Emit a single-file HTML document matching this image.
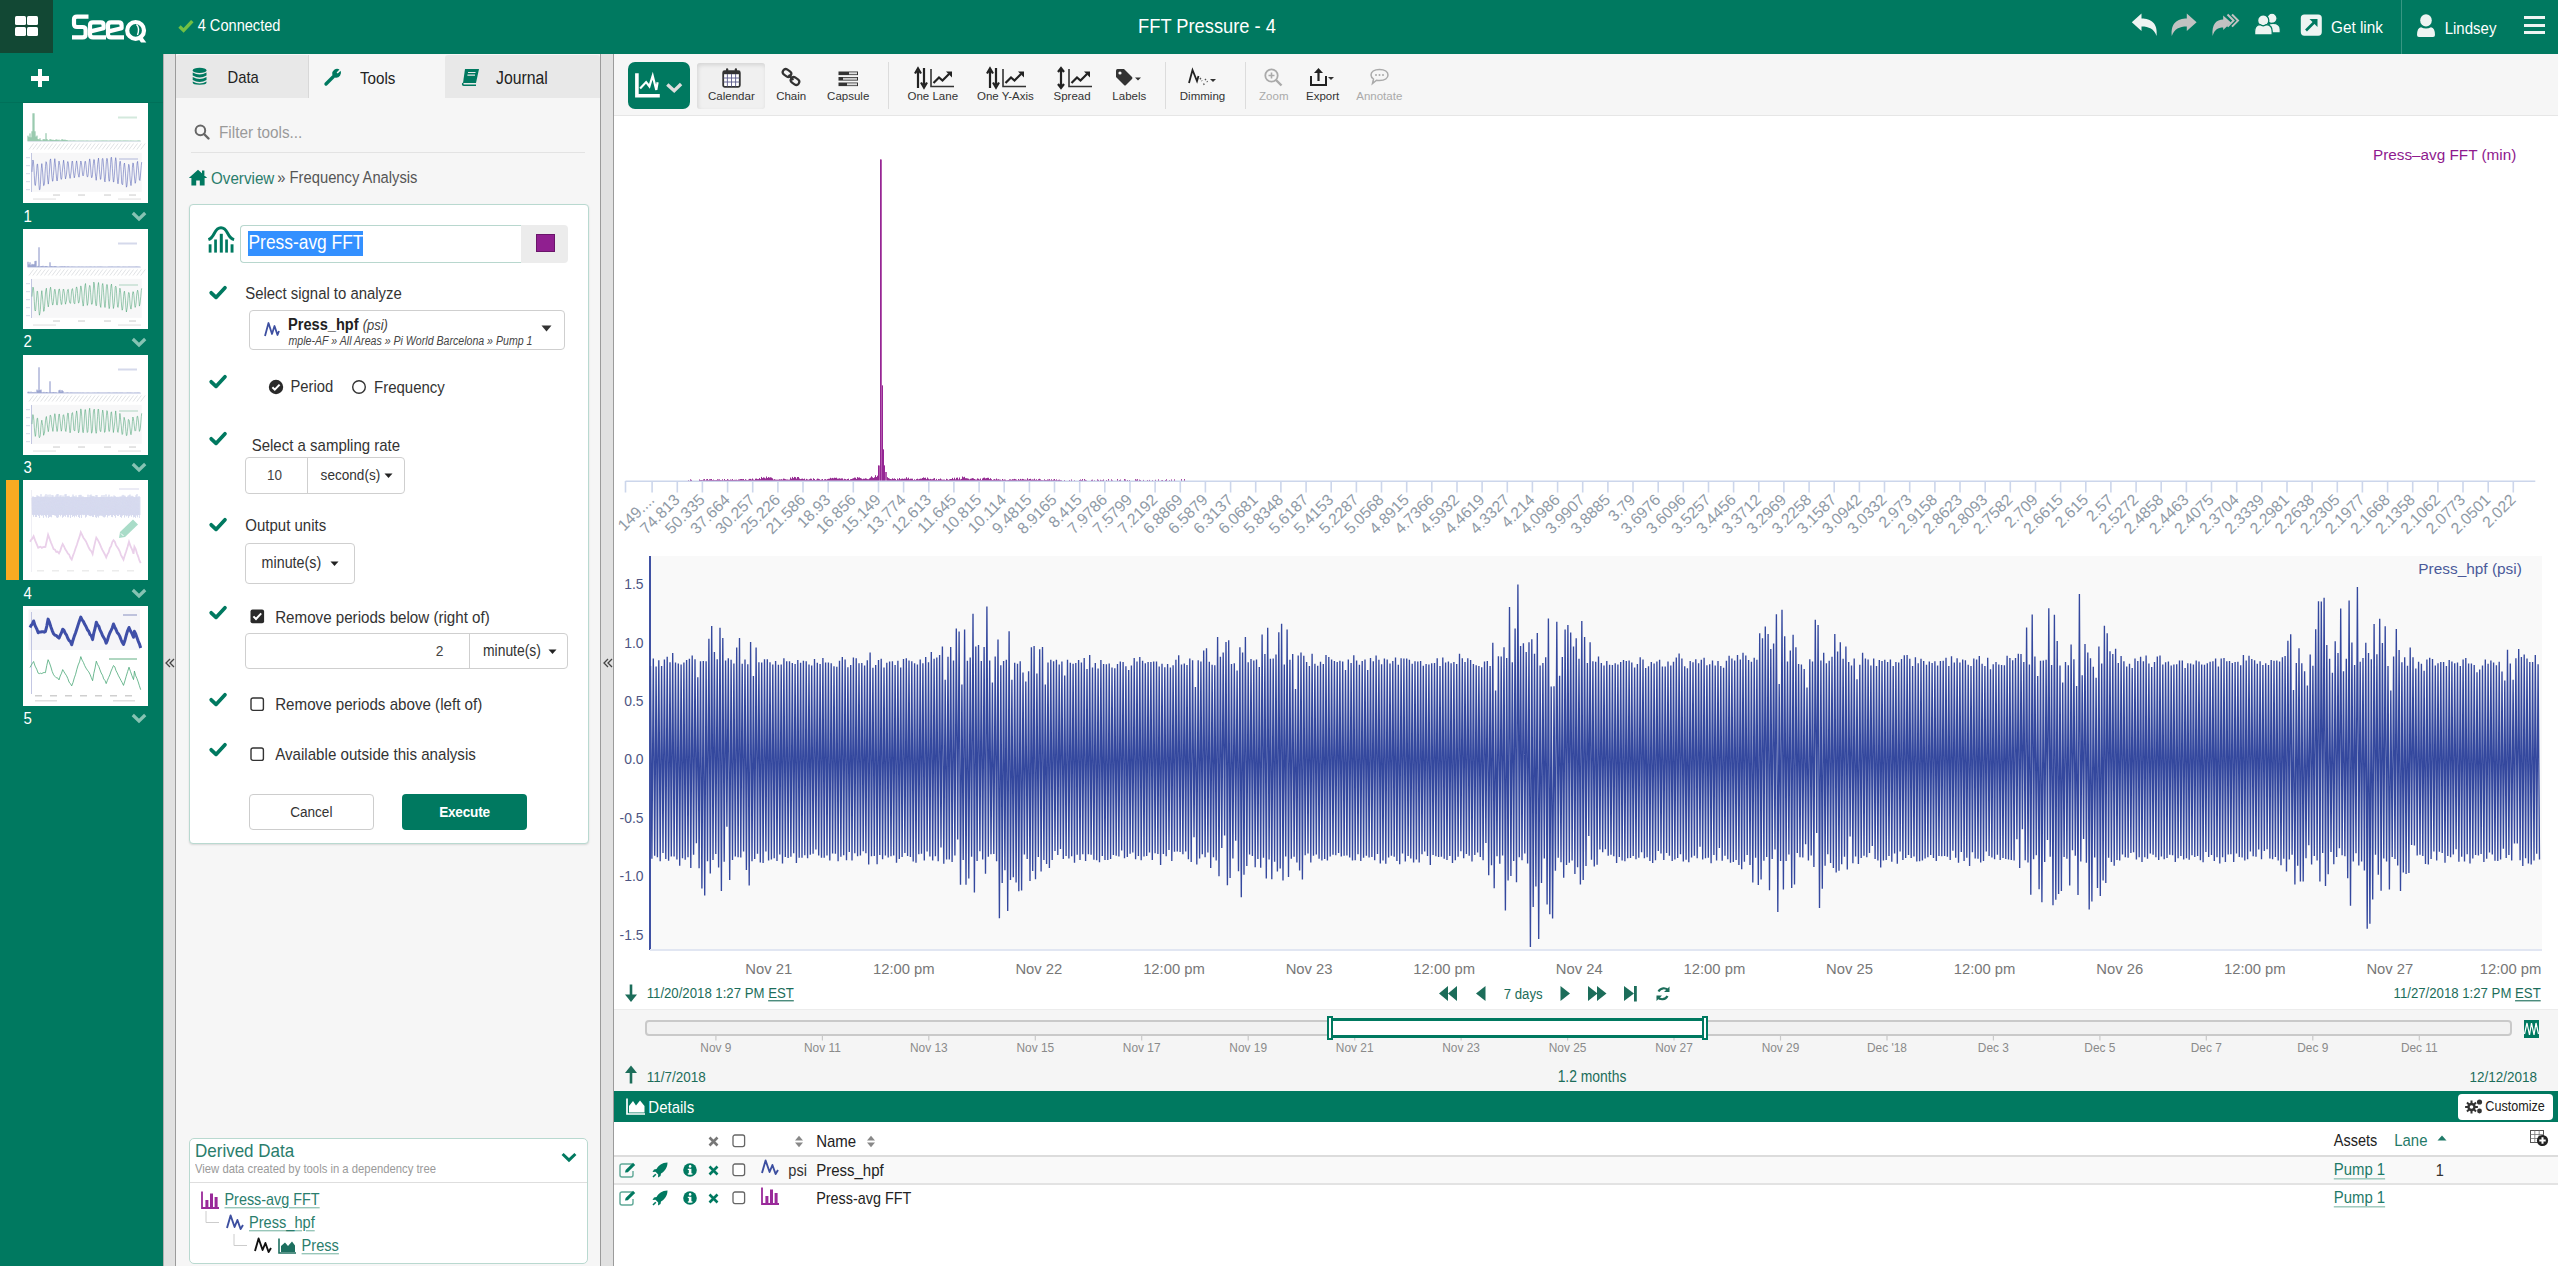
<!DOCTYPE html>
<html><head><meta charset="utf-8"><title>FFT Pressure - 4</title>
<style>
html,body{margin:0;padding:0;}
body{width:2558px;height:1266px;overflow:hidden;position:relative;background:#fff;font-family:"Liberation Sans", sans-serif;}
.t{position:absolute;white-space:nowrap;line-height:1;}
svg{position:absolute;overflow:visible;}
</style></head><body>
<div style="position:absolute;left:0px;top:0px;width:2558px;height:54px;background:#007960;"></div><div style="position:absolute;left:0px;top:0px;width:53px;height:53px;background:#124834;"></div><div style="position:absolute;left:14.5px;top:16px;width:11.2px;height:9.2px;background:#fff;border-radius:1.5px;"></div><div style="position:absolute;left:14.5px;top:26.8px;width:11.2px;height:9.2px;background:#fff;border-radius:1.5px;"></div><div style="position:absolute;left:26.5px;top:16px;width:11.2px;height:9.2px;background:#fff;border-radius:1.5px;"></div><div style="position:absolute;left:26.5px;top:26.8px;width:11.2px;height:9.2px;background:#fff;border-radius:1.5px;"></div><svg style="left:0;top:0" width="160" height="54" viewBox="0 0 160 54">
<g fill="none" stroke="#fff" stroke-width="4.2" stroke-linejoin="round">
<path d="M88.5,16.6 H77 Q74,16.6 74,19.6 V24 Q74,27 77,27 H82.5 Q85.6,27 85.6,30 V34.5 Q85.6,37.4 82.6,37.4 H72"/>
<path d="M89.5,31.6 L103.6,28.2 V25.2 Q103.6,22.3 100.8,22.3 H93 Q90,22.3 90,25.2 V34.5 Q90,37.4 93,37.4 H106"/>
<path d="M107.6,31.6 L121.6,28.2 V25.2 Q121.6,22.3 118.8,22.3 H111 Q108,22.3 108,25.2 V34.5 Q108,37.4 111,37.4 H124"/>
<circle cx="135.6" cy="30.4" r="8.4"/>
</g>
<path d="M137,37 L141.5,36 L146.3,42.6 L141,42.6 Z" fill="#fff"/>
<path d="M136.5,24.5 Q140,28 137.5,35" fill="none" stroke="#fff" stroke-width="1.4"/>
</svg><svg style="left:178px;top:19px" width="16" height="14" viewBox="0 0 16 14"><path d="M1.5,7.5 L5.6,11.4 L14.3,2.2" fill="none" stroke="#72c043" stroke-width="3.4"/></svg><div class="t " style="left:197.7px;top:18.8px;font-size:14.6px;color:#fff;transform:scaleY(1.12);transform-origin:0 84.65%;">4 Connected</div><div class="t " style="left:707.0px;width:1000px;text-align:center;top:17.8px;font-size:18.3px;color:#fff;transform:scaleY(1.12);transform-origin:0 84.65%;">FFT Pressure - 4</div><svg style="left:2131px;top:13px" width="28" height="24" viewBox="0 0 28 24"><path d="M0.8,9.2 L10.5,0.6 V5.4 C20,5.4 27,10 25.6,23 C23,16 18,13.6 10.5,13.6 V18 Z" fill="#eef4f2"/></svg><svg style="left:2171px;top:13px" width="28" height="24" viewBox="0 0 28 24"><path d="M25.6,9.2 L15.8,0.6 V5.4 C6.4,5.4 -0.6,10 0.8,23 C3.4,16 8.4,13.6 15.8,13.6 V18 Z" fill="#c2c2c2"/></svg><svg style="left:2212px;top:13px" width="28" height="24" viewBox="0 0 28 24"><path d="M19,9.6 L11.2,2.6 V6.6 C4.5,6.6 -0.5,11 0.6,23 C2.6,16.5 6,14.6 11.2,14.6 V17 Z" fill="#c2c2c2"/><path d="M15.5,1.5 L21.5,7.6 L15.5,13.6 M20,1.5 L26,7.6 L20,13.6" fill="none" stroke="#c2c2c2" stroke-width="2"/></svg><svg style="left:2250px;top:8px" width="34" height="32" viewBox="2250 8 34 32">
<g fill="#eef4f2" stroke="#007960" stroke-width="1.3">
<circle cx="2272" cy="18.3" r="5.1"/>
<path d="M2266.5,33 V29.5 Q2266.5,23.3 2273,23.3 Q2280.3,23.3 2280.3,29.5 V33 Z"/>
<circle cx="2263.2" cy="20.5" r="5.6"/>
<path d="M2254.6,35 V31.5 Q2254.6,25 2260,24.6 Q2263.2,27.2 2266.4,24.6 Q2272.2,25 2272.2,31.5 V35 Z"/>
</g></svg><svg style="left:2300px;top:14px" width="23" height="23" viewBox="0 0 23 23">
<rect x="0.8" y="0.5" width="21" height="21.2" rx="3.6" fill="#eef4f2"/>
<path d="M6,16.5 L15.5,7" stroke="#007960" stroke-width="2.6"/><path d="M9.5,5 H17.5 V13 Z" fill="#007960"/></svg><div class="t " style="left:2331.0px;top:20.3px;font-size:15.3px;color:#fff;transform:scaleY(1.12);transform-origin:0 84.65%;">Get link</div><div style="position:absolute;left:2401px;top:0px;width:1px;height:54px;background:rgba(255,255,255,0.22);"></div><svg style="left:2416px;top:13px" width="20" height="24" viewBox="0 0 20 24">
<g fill="#eef4f2"><ellipse cx="10" cy="7.4" rx="5.8" ry="6.2"/><path d="M1,22 Q1,15 5,14.2 Q10,17 15,14.2 Q19,15 19,22 Q19,24 17,24 H3 Q1,24 1,22 Z"/></g></svg><div class="t " style="left:2444.7px;top:20.5px;font-size:15.0px;color:#fff;transform:scaleY(1.12);transform-origin:0 84.65%;">Lindsey</div><div style="position:absolute;left:2523.5px;top:16.2px;width:21.5px;height:3.2px;background:#eef4f2;"></div><div style="position:absolute;left:2523.5px;top:23.5px;width:21.5px;height:3.2px;background:#eef4f2;"></div><div style="position:absolute;left:2523.5px;top:30.7px;width:21.5px;height:3.2px;background:#eef4f2;"></div><div style="position:absolute;left:0px;top:54px;width:163px;height:1212px;background:#007960;"></div><div style="position:absolute;left:30.8px;top:76px;width:18.5px;height:4.6px;background:#fff;"></div><div style="position:absolute;left:37.7px;top:69px;width:4.6px;height:18px;background:#fff;"></div><div style="position:absolute;left:0px;top:102px;width:163px;height:1px;background:rgba(0,0,0,0.07);"></div><div style="position:absolute;left:23px;top:103.3px;width:125px;height:100px;background:#fff;overflow:hidden;"><svg style="left:0;top:0" width="125" height="100" viewBox="0 0 125 100"><rect x="95" y="13.5" width="19" height="2" fill="#3a9a66" opacity="0.22"/><path d="M5.0,38.3 v-5.6 M6.0,38.3 v-4.2 M7.0,38.3 v-7.9 M8.0,38.3 v-4.0 M9.0,38.3 v-10.0 M10.0,38.3 v-28.0 M11.0,38.3 v-28.0 M12.0,38.3 v-10.0 M13.0,38.3 v-4.7 M14.0,38.3 v-5.7 M15.0,38.3 v-2.3 M16.0,38.3 v-1.9 M17.0,38.3 v-3.0 M18.0,38.3 v-1.2 M19.0,38.3 v-0.8 M20.0,38.3 v-1.9 M21.0,38.3 v-2.3 M22.0,38.3 v-1.7 M23.0,38.3 v-8.1 M24.0,38.3 v-2.3 M25.0,38.3 v-1.1 M26.0,38.3 v-1.0 M27.0,38.3 v-2.2 M28.0,38.3 v-1.9 M29.0,38.3 v-1.4 M30.0,38.3 v-1.6 M31.0,38.3 v-1.2 M32.0,38.3 v-1.3 M33.0,38.3 v-1.9 M34.0,38.3 v-1.8 M35.0,38.3 v-1.2 M36.0,38.3 v-1.7 M37.0,38.3 v-0.9 M38.0,38.3 v-1.1 M39.0,38.3 v-2.2 M40.0,38.3 v-1.7 M41.0,38.3 v-1.4 M42.0,38.3 v-1.7 M43.0,38.3 v-1.2 M44.0,38.3 v-1.3 M45.0,38.3 v-0.8 M46.0,38.3 v-0.7 M47.0,38.3 v-0.9 M48.0,38.3 v-0.8 M49.0,38.3 v-0.7 M50.0,38.3 v-0.8 M51.0,38.3 v-0.9 M52.0,38.3 v-0.7 M53.0,38.3 v-0.7 M54.0,38.3 v-0.6 M55.0,38.3 v-0.7 M56.0,38.3 v-0.7 M57.0,38.3 v-0.7 M58.0,38.3 v-0.7 M59.0,38.3 v-0.7 M60.0,38.3 v-0.7 M61.0,38.3 v-0.7 M62.0,38.3 v-0.6 M63.0,38.3 v-0.7 M64.0,38.3 v-0.8 M65.0,38.3 v-0.7 M66.0,38.3 v-0.6 M67.0,38.3 v-0.6 M68.0,38.3 v-0.7 M69.0,38.3 v-0.6 M70.0,38.3 v-0.6 M71.0,38.3 v-0.6 M72.0,38.3 v-0.7 M73.0,38.3 v-0.8 M74.0,38.3 v-0.7 M75.0,38.3 v-0.7 M76.0,38.3 v-0.7 M77.0,38.3 v-0.7 M78.0,38.3 v-0.7 M79.0,38.3 v-0.8 M80.0,38.3 v-0.8 M81.0,38.3 v-0.8 M82.0,38.3 v-0.7 M83.0,38.3 v-0.8 M84.0,38.3 v-0.8 M85.0,38.3 v-0.6 M86.0,38.3 v-0.7 M87.0,38.3 v-0.7 M88.0,38.3 v-0.8 M89.0,38.3 v-0.8 M90.0,38.3 v-0.7 M91.0,38.3 v-0.8 M92.0,38.3 v-0.7 M93.0,38.3 v-0.8 M94.0,38.3 v-0.8 M95.0,38.3 v-0.7 M96.0,38.3 v-0.8 M97.0,38.3 v-0.8 M98.0,38.3 v-0.8 M99.0,38.3 v-0.6 M100.0,38.3 v-0.8 M101.0,38.3 v-0.8 M102.0,38.3 v-0.8 M103.0,38.3 v-0.8 M104.0,38.3 v-0.7 M105.0,38.3 v-0.8 M106.0,38.3 v-0.6 M107.0,38.3 v-0.7 M108.0,38.3 v-0.8 M109.0,38.3 v-0.6 M110.0,38.3 v-0.7 M111.0,38.3 v-0.6 M112.0,38.3 v-0.6 M113.0,38.3 v-0.6 M114.0,38.3 v-0.6 M115.0,38.3 v-0.8 M116.0,38.3 v-0.8 M117.0,38.3 v-0.7" stroke="#3a9a66" stroke-width="0.8" opacity="0.8"/><line x1="5" y1="38.6" x2="118" y2="38.6" stroke="#d6dcec" stroke-width="0.6"/><line x1="6.0" y1="46.5" x2="10.5" y2="40.5" stroke="#b0b6bc" stroke-width="0.7" opacity="0.55"/><line x1="9.8" y1="46.5" x2="14.3" y2="40.5" stroke="#b0b6bc" stroke-width="0.7" opacity="0.55"/><line x1="13.7" y1="46.5" x2="18.2" y2="40.5" stroke="#b0b6bc" stroke-width="0.7" opacity="0.55"/><line x1="17.6" y1="46.5" x2="22.1" y2="40.5" stroke="#b0b6bc" stroke-width="0.7" opacity="0.55"/><line x1="21.4" y1="46.5" x2="25.9" y2="40.5" stroke="#b0b6bc" stroke-width="0.7" opacity="0.55"/><line x1="25.2" y1="46.5" x2="29.8" y2="40.5" stroke="#b0b6bc" stroke-width="0.7" opacity="0.55"/><line x1="29.1" y1="46.5" x2="33.6" y2="40.5" stroke="#b0b6bc" stroke-width="0.7" opacity="0.55"/><line x1="33.0" y1="46.5" x2="37.5" y2="40.5" stroke="#b0b6bc" stroke-width="0.7" opacity="0.55"/><line x1="36.8" y1="46.5" x2="41.3" y2="40.5" stroke="#b0b6bc" stroke-width="0.7" opacity="0.55"/><line x1="40.6" y1="46.5" x2="45.1" y2="40.5" stroke="#b0b6bc" stroke-width="0.7" opacity="0.55"/><line x1="44.5" y1="46.5" x2="49.0" y2="40.5" stroke="#b0b6bc" stroke-width="0.7" opacity="0.55"/><line x1="48.4" y1="46.5" x2="52.9" y2="40.5" stroke="#b0b6bc" stroke-width="0.7" opacity="0.55"/><line x1="52.2" y1="46.5" x2="56.7" y2="40.5" stroke="#b0b6bc" stroke-width="0.7" opacity="0.55"/><line x1="56.1" y1="46.5" x2="60.6" y2="40.5" stroke="#b0b6bc" stroke-width="0.7" opacity="0.55"/><line x1="59.9" y1="46.5" x2="64.4" y2="40.5" stroke="#b0b6bc" stroke-width="0.7" opacity="0.55"/><line x1="63.8" y1="46.5" x2="68.2" y2="40.5" stroke="#b0b6bc" stroke-width="0.7" opacity="0.55"/><line x1="67.6" y1="46.5" x2="72.1" y2="40.5" stroke="#b0b6bc" stroke-width="0.7" opacity="0.55"/><line x1="71.5" y1="46.5" x2="76.0" y2="40.5" stroke="#b0b6bc" stroke-width="0.7" opacity="0.55"/><line x1="75.3" y1="46.5" x2="79.8" y2="40.5" stroke="#b0b6bc" stroke-width="0.7" opacity="0.55"/><line x1="79.2" y1="46.5" x2="83.7" y2="40.5" stroke="#b0b6bc" stroke-width="0.7" opacity="0.55"/><line x1="83.0" y1="46.5" x2="87.5" y2="40.5" stroke="#b0b6bc" stroke-width="0.7" opacity="0.55"/><line x1="86.9" y1="46.5" x2="91.4" y2="40.5" stroke="#b0b6bc" stroke-width="0.7" opacity="0.55"/><line x1="90.7" y1="46.5" x2="95.2" y2="40.5" stroke="#b0b6bc" stroke-width="0.7" opacity="0.55"/><line x1="94.5" y1="46.5" x2="99.0" y2="40.5" stroke="#b0b6bc" stroke-width="0.7" opacity="0.55"/><line x1="98.4" y1="46.5" x2="102.9" y2="40.5" stroke="#b0b6bc" stroke-width="0.7" opacity="0.55"/><line x1="102.2" y1="46.5" x2="106.8" y2="40.5" stroke="#b0b6bc" stroke-width="0.7" opacity="0.55"/><line x1="106.1" y1="46.5" x2="110.6" y2="40.5" stroke="#b0b6bc" stroke-width="0.7" opacity="0.55"/><line x1="110.0" y1="46.5" x2="114.5" y2="40.5" stroke="#b0b6bc" stroke-width="0.7" opacity="0.55"/><line x1="113.8" y1="46.5" x2="118.3" y2="40.5" stroke="#b0b6bc" stroke-width="0.7" opacity="0.55"/><line x1="117.7" y1="46.5" x2="122.2" y2="40.5" stroke="#b0b6bc" stroke-width="0.7" opacity="0.55"/><rect x="8.3" y="49.8" width="110.4" height="39" fill="#f7f7f8"/><rect x="96" y="55" width="19" height="2" fill="#4a58b0" opacity="0.2"/><line x1="8.5" y1="50" x2="8.5" y2="89" stroke="#aab0d6" stroke-width="0.7"/><rect x="3" y="54" width="4" height="1.2" fill="#dde0ec"/><rect x="3" y="62" width="4" height="1.2" fill="#dde0ec"/><rect x="3" y="70" width="4" height="1.2" fill="#dde0ec"/><rect x="3" y="78" width="4" height="1.2" fill="#dde0ec"/><rect x="3" y="86" width="4" height="1.2" fill="#dde0ec"/><path d="M9.0,68.9 L9.5,61.0 L9.9,57.0 L10.4,58.4 L10.9,64.4 L11.3,72.7 L11.8,81.1 L12.3,82.5 L12.7,80.1 L13.2,74.1 L13.7,67.8 L14.1,61.3 L14.6,61.1 L15.0,65.6 L15.5,73.8 L16.0,82.4 L16.4,86.7 L16.9,86.6 L17.4,81.4 L17.8,73.0 L18.3,65.5 L18.8,60.6 L19.2,64.0 L19.7,69.9 L20.2,77.9 L20.6,82.6 L21.1,82.3 L21.6,79.1 L22.0,70.5 L22.5,63.6 L23.0,58.7 L23.4,59.3 L23.9,62.0 L24.3,71.4 L24.8,77.5 L25.3,81.1 L25.7,78.0 L26.2,71.5 L26.7,64.1 L27.1,57.3 L27.6,55.9 L28.1,60.9 L28.5,68.1 L29.0,74.6 L29.5,78.2 L29.9,78.1 L30.4,72.4 L30.9,66.5 L31.3,60.2 L31.8,55.7 L32.2,59.2 L32.7,64.8 L33.2,70.9 L33.6,75.9 L34.1,78.0 L34.6,75.0 L35.0,69.2 L35.5,62.1 L36.0,58.1 L36.4,59.7 L36.9,62.4 L37.4,68.6 L37.8,75.0 L38.3,76.4 L38.8,75.0 L39.2,69.7 L39.7,65.0 L40.2,60.3 L40.6,57.2 L41.1,60.9 L41.6,66.5 L42.0,72.3 L42.5,75.9 L42.9,74.2 L43.4,71.8 L43.9,66.7 L44.3,60.6 L44.8,58.5 L45.3,60.0 L45.7,64.0 L46.2,70.3 L46.7,73.7 L47.1,75.4 L47.6,72.2 L48.1,69.0 L48.5,63.9 L49.0,58.6 L49.5,58.0 L49.9,61.9 L50.4,68.1 L50.9,72.4 L51.3,74.8 L51.8,72.7 L52.2,69.3 L52.7,64.8 L53.2,60.0 L53.6,57.9 L54.1,60.7 L54.6,66.1 L55.0,70.1 L55.5,72.6 L56.0,74.2 L56.4,71.9 L56.9,65.1 L57.4,61.2 L57.8,58.0 L58.3,59.3 L58.8,62.9 L59.2,67.9 L59.7,72.3 L60.2,72.9 L60.6,71.6 L61.1,66.8 L61.5,62.8 L62.0,58.3 L62.5,58.5 L62.9,61.4 L63.4,66.8 L63.9,72.1 L64.3,73.9 L64.8,73.7 L65.3,70.2 L65.7,64.2 L66.2,59.1 L66.7,55.9 L67.1,58.1 L67.6,64.1 L68.1,71.1 L68.5,74.5 L69.0,74.6 L69.5,71.4 L69.9,65.3 L70.4,60.3 L70.8,56.5 L71.3,56.8 L71.8,62.5 L72.2,69.1 L72.7,73.3 L73.2,77.3 L73.6,73.7 L74.1,68.9 L74.6,61.7 L75.0,58.3 L75.5,55.1 L76.0,60.1 L76.4,66.6 L76.9,71.5 L77.4,76.4 L77.8,76.2 L78.3,71.0 L78.8,63.2 L79.2,56.5 L79.7,55.4 L80.1,57.1 L80.6,64.2 L81.1,72.0 L81.5,77.5 L82.0,78.9 L82.5,73.2 L82.9,66.6 L83.4,58.4 L83.9,55.3 L84.3,56.0 L84.8,61.0 L85.3,68.3 L85.7,75.5 L86.2,78.3 L86.7,77.0 L87.1,69.2 L87.6,61.8 L88.0,54.8 L88.5,54.2 L89.0,59.4 L89.4,65.7 L89.9,73.4 L90.4,79.0 L90.8,78.9 L91.3,72.8 L91.8,65.8 L92.2,58.6 L92.7,54.7 L93.2,57.4 L93.6,65.0 L94.1,73.2 L94.6,78.6 L95.0,80.8 L95.5,77.4 L96.0,70.2 L96.4,63.0 L96.9,58.4 L97.4,58.4 L97.8,63.6 L98.3,71.4 L98.7,80.3 L99.2,81.5 L99.7,81.5 L100.1,74.3 L100.6,66.6 L101.1,61.2 L101.5,60.1 L102.0,64.3 L102.5,70.9 L102.9,77.7 L103.4,84.2 L103.9,83.0 L104.3,78.9 L104.8,70.8 L105.3,65.0 L105.7,61.3 L106.2,62.5 L106.7,69.2 L107.1,76.2 L107.6,80.2 L108.0,82.6 L108.5,78.1 L109.0,72.6 L109.4,64.3 L109.9,59.9 L110.4,60.6 L110.8,65.5 L111.3,72.0 L111.8,77.3 L112.2,80.3 L112.7,78.4 L113.2,73.3 L113.6,66.9 L114.1,60.1 L114.6,58.4 L115.0,62.4 L115.5,67.3 L116.0,72.8 L116.4,77.0 L116.9,77.5 L117.3,74.0 L117.8,68.0 L118.3,62.3 L118.7,59.1" fill="none" stroke="#4a58b0" stroke-width="0.7" opacity="0.75"/><rect x="30" y="91.3" width="7" height="1.5" fill="#dcdcdc"/><rect x="55" y="91.3" width="7" height="1.5" fill="#dcdcdc"/><rect x="81" y="91.3" width="7" height="1.5" fill="#dcdcdc"/><rect x="106" y="91.3" width="7" height="1.5" fill="#dcdcdc"/><rect x="10" y="95.4" width="23" height="1.3" fill="#e6e6e6"/><rect x="95" y="95.4" width="23" height="1.3" fill="#e6e6e6"/></svg></div><div class="t " style="left:23.5px;top:208.7px;font-size:15px;color:#fff;transform:scaleY(1.12);transform-origin:0 84.65%;">1</div><svg style="left:131px;top:210.9px" width="16" height="11" viewBox="0 0 16 11"><path d="M1.8,2 L8,8 L14.2,2" fill="none" stroke="#86c3b3" stroke-width="3.2"/></svg><div style="position:absolute;left:23px;top:228.9px;width:125px;height:100px;background:#fff;overflow:hidden;"><svg style="left:0;top:0" width="125" height="100" viewBox="0 0 125 100"><rect x="95" y="13.5" width="19" height="2" fill="#4050a4" opacity="0.22"/><path d="M5.0,38.3 v-5.5 M6.0,38.3 v-2.9 M7.0,38.3 v-5.0 M8.0,38.3 v-2.1 M9.0,38.3 v-3.4 M10.0,38.3 v-2.8 M11.0,38.3 v-3.1 M12.0,38.3 v-6.2 M13.0,38.3 v-6.5 M14.0,38.3 v-0.7 M15.0,38.3 v-1.4 M16.0,38.3 v-20.0 M17.0,38.3 v-0.7 M18.0,38.3 v-1.3 M19.0,38.3 v-1.1 M20.0,38.3 v-1.5 M21.0,38.3 v-0.8 M22.0,38.3 v-1.1 M23.0,38.3 v-1.3 M24.0,38.3 v-1.1 M25.0,38.3 v-0.8 M26.0,38.3 v-0.7 M27.0,38.3 v-5.0 M28.0,38.3 v-1.0 M29.0,38.3 v-1.3 M30.0,38.3 v-0.7 M31.0,38.3 v-1.2 M32.0,38.3 v-1.1 M33.0,38.3 v-1.2 M34.0,38.3 v-0.6 M35.0,38.3 v-0.8 M36.0,38.3 v-0.6 M37.0,38.3 v-1.0 M38.0,38.3 v-0.8 M39.0,38.3 v-1.1 M40.0,38.3 v-0.8 M41.0,38.3 v-1.0 M42.0,38.3 v-1.0 M43.0,38.3 v-0.7 M44.0,38.3 v-0.8 M45.0,38.3 v-1.0 M46.0,38.3 v-0.8 M47.0,38.3 v-0.7 M48.0,38.3 v-0.7 M49.0,38.3 v-0.9 M50.0,38.3 v-0.7 M51.0,38.3 v-0.8 M52.0,38.3 v-0.7 M53.0,38.3 v-0.7 M54.0,38.3 v-0.6 M55.0,38.3 v-0.8 M56.0,38.3 v-0.8 M57.0,38.3 v-0.7 M58.0,38.3 v-0.7 M59.0,38.3 v-0.8 M60.0,38.3 v-0.7 M61.0,38.3 v-0.7 M62.0,38.3 v-0.6 M63.0,38.3 v-0.8 M64.0,38.3 v-0.7 M65.0,38.3 v-0.7 M66.0,38.3 v-0.7 M67.0,38.3 v-0.8 M68.0,38.3 v-0.8 M69.0,38.3 v-0.7 M70.0,38.3 v-0.6 M71.0,38.3 v-0.8 M72.0,38.3 v-0.8 M73.0,38.3 v-0.6 M74.0,38.3 v-0.7 M75.0,38.3 v-0.8 M76.0,38.3 v-0.7 M77.0,38.3 v-0.8 M78.0,38.3 v-0.8 M79.0,38.3 v-0.7 M80.0,38.3 v-0.7 M81.0,38.3 v-0.6 M82.0,38.3 v-0.7 M83.0,38.3 v-0.6 M84.0,38.3 v-0.6 M85.0,38.3 v-0.7 M86.0,38.3 v-0.8 M87.0,38.3 v-0.7 M88.0,38.3 v-0.8 M89.0,38.3 v-0.8 M90.0,38.3 v-0.8 M91.0,38.3 v-0.6 M92.0,38.3 v-0.8 M93.0,38.3 v-0.6 M94.0,38.3 v-0.8 M95.0,38.3 v-0.8 M96.0,38.3 v-0.8 M97.0,38.3 v-0.7 M98.0,38.3 v-0.6 M99.0,38.3 v-0.6 M100.0,38.3 v-0.8 M101.0,38.3 v-0.7 M102.0,38.3 v-0.7 M103.0,38.3 v-0.7 M104.0,38.3 v-0.6 M105.0,38.3 v-0.7 M106.0,38.3 v-0.8 M107.0,38.3 v-0.7 M108.0,38.3 v-0.7 M109.0,38.3 v-0.7 M110.0,38.3 v-0.7 M111.0,38.3 v-0.7 M112.0,38.3 v-0.7 M113.0,38.3 v-0.8 M114.0,38.3 v-0.8 M115.0,38.3 v-0.7 M116.0,38.3 v-0.7 M117.0,38.3 v-0.6" stroke="#4050a4" stroke-width="0.8" opacity="0.8"/><line x1="5" y1="38.6" x2="118" y2="38.6" stroke="#d6dcec" stroke-width="0.6"/><line x1="6.0" y1="46.5" x2="10.5" y2="40.5" stroke="#b0b6bc" stroke-width="0.7" opacity="0.55"/><line x1="9.8" y1="46.5" x2="14.3" y2="40.5" stroke="#b0b6bc" stroke-width="0.7" opacity="0.55"/><line x1="13.7" y1="46.5" x2="18.2" y2="40.5" stroke="#b0b6bc" stroke-width="0.7" opacity="0.55"/><line x1="17.6" y1="46.5" x2="22.1" y2="40.5" stroke="#b0b6bc" stroke-width="0.7" opacity="0.55"/><line x1="21.4" y1="46.5" x2="25.9" y2="40.5" stroke="#b0b6bc" stroke-width="0.7" opacity="0.55"/><line x1="25.2" y1="46.5" x2="29.8" y2="40.5" stroke="#b0b6bc" stroke-width="0.7" opacity="0.55"/><line x1="29.1" y1="46.5" x2="33.6" y2="40.5" stroke="#b0b6bc" stroke-width="0.7" opacity="0.55"/><line x1="33.0" y1="46.5" x2="37.5" y2="40.5" stroke="#b0b6bc" stroke-width="0.7" opacity="0.55"/><line x1="36.8" y1="46.5" x2="41.3" y2="40.5" stroke="#b0b6bc" stroke-width="0.7" opacity="0.55"/><line x1="40.6" y1="46.5" x2="45.1" y2="40.5" stroke="#b0b6bc" stroke-width="0.7" opacity="0.55"/><line x1="44.5" y1="46.5" x2="49.0" y2="40.5" stroke="#b0b6bc" stroke-width="0.7" opacity="0.55"/><line x1="48.4" y1="46.5" x2="52.9" y2="40.5" stroke="#b0b6bc" stroke-width="0.7" opacity="0.55"/><line x1="52.2" y1="46.5" x2="56.7" y2="40.5" stroke="#b0b6bc" stroke-width="0.7" opacity="0.55"/><line x1="56.1" y1="46.5" x2="60.6" y2="40.5" stroke="#b0b6bc" stroke-width="0.7" opacity="0.55"/><line x1="59.9" y1="46.5" x2="64.4" y2="40.5" stroke="#b0b6bc" stroke-width="0.7" opacity="0.55"/><line x1="63.8" y1="46.5" x2="68.2" y2="40.5" stroke="#b0b6bc" stroke-width="0.7" opacity="0.55"/><line x1="67.6" y1="46.5" x2="72.1" y2="40.5" stroke="#b0b6bc" stroke-width="0.7" opacity="0.55"/><line x1="71.5" y1="46.5" x2="76.0" y2="40.5" stroke="#b0b6bc" stroke-width="0.7" opacity="0.55"/><line x1="75.3" y1="46.5" x2="79.8" y2="40.5" stroke="#b0b6bc" stroke-width="0.7" opacity="0.55"/><line x1="79.2" y1="46.5" x2="83.7" y2="40.5" stroke="#b0b6bc" stroke-width="0.7" opacity="0.55"/><line x1="83.0" y1="46.5" x2="87.5" y2="40.5" stroke="#b0b6bc" stroke-width="0.7" opacity="0.55"/><line x1="86.9" y1="46.5" x2="91.4" y2="40.5" stroke="#b0b6bc" stroke-width="0.7" opacity="0.55"/><line x1="90.7" y1="46.5" x2="95.2" y2="40.5" stroke="#b0b6bc" stroke-width="0.7" opacity="0.55"/><line x1="94.5" y1="46.5" x2="99.0" y2="40.5" stroke="#b0b6bc" stroke-width="0.7" opacity="0.55"/><line x1="98.4" y1="46.5" x2="102.9" y2="40.5" stroke="#b0b6bc" stroke-width="0.7" opacity="0.55"/><line x1="102.2" y1="46.5" x2="106.8" y2="40.5" stroke="#b0b6bc" stroke-width="0.7" opacity="0.55"/><line x1="106.1" y1="46.5" x2="110.6" y2="40.5" stroke="#b0b6bc" stroke-width="0.7" opacity="0.55"/><line x1="110.0" y1="46.5" x2="114.5" y2="40.5" stroke="#b0b6bc" stroke-width="0.7" opacity="0.55"/><line x1="113.8" y1="46.5" x2="118.3" y2="40.5" stroke="#b0b6bc" stroke-width="0.7" opacity="0.55"/><line x1="117.7" y1="46.5" x2="122.2" y2="40.5" stroke="#b0b6bc" stroke-width="0.7" opacity="0.55"/><rect x="8.3" y="49.8" width="110.4" height="39" fill="#f7f7f8"/><rect x="96" y="55" width="19" height="2" fill="#3f9e6c" opacity="0.2"/><line x1="8.5" y1="50" x2="8.5" y2="89" stroke="#aab0d6" stroke-width="0.7"/><rect x="3" y="54" width="4" height="1.2" fill="#dde0ec"/><rect x="3" y="62" width="4" height="1.2" fill="#dde0ec"/><rect x="3" y="70" width="4" height="1.2" fill="#dde0ec"/><rect x="3" y="78" width="4" height="1.2" fill="#dde0ec"/><rect x="3" y="86" width="4" height="1.2" fill="#dde0ec"/><path d="M9.0,67.6 L9.5,61.1 L9.9,58.1 L10.4,58.8 L10.9,64.1 L11.3,72.3 L11.8,80.8 L12.3,82.0 L12.7,80.8 L13.2,74.1 L13.7,67.9 L14.1,62.1 L14.6,62.4 L15.0,66.6 L15.5,73.7 L16.0,82.7 L16.4,86.2 L16.9,84.2 L17.4,80.4 L17.8,72.8 L18.3,65.9 L18.8,61.7 L19.2,65.2 L19.7,70.7 L20.2,76.5 L20.6,82.3 L21.1,82.1 L21.6,77.4 L22.0,71.0 L22.5,64.0 L23.0,60.5 L23.4,59.2 L23.9,65.2 L24.3,70.9 L24.8,75.3 L25.3,77.9 L25.7,75.4 L26.2,70.3 L26.7,64.1 L27.1,60.0 L27.6,58.2 L28.1,61.9 L28.5,68.3 L29.0,72.6 L29.5,75.9 L29.9,75.9 L30.4,72.7 L30.9,66.7 L31.3,62.0 L31.8,60.2 L32.2,61.2 L32.7,65.6 L33.2,71.0 L33.6,75.2 L34.1,76.1 L34.6,74.3 L35.0,67.9 L35.5,62.9 L36.0,60.1 L36.4,60.0 L36.9,63.0 L37.4,69.5 L37.8,72.4 L38.3,75.5 L38.8,75.3 L39.2,70.7 L39.7,64.7 L40.2,60.6 L40.6,60.0 L41.1,62.4 L41.6,66.0 L42.0,72.0 L42.5,75.2 L42.9,73.5 L43.4,72.2 L43.9,66.2 L44.3,62.5 L44.8,60.6 L45.3,60.4 L45.7,64.3 L46.2,70.8 L46.7,73.6 L47.1,74.3 L47.6,74.2 L48.1,68.3 L48.5,62.9 L49.0,60.3 L49.5,59.6 L49.9,62.3 L50.4,66.9 L50.9,73.6 L51.3,74.5 L51.8,74.8 L52.2,69.5 L52.7,64.8 L53.2,59.0 L53.6,57.9 L54.1,59.6 L54.6,64.5 L55.0,70.6 L55.5,74.0 L56.0,73.7 L56.4,70.9 L56.9,66.1 L57.4,60.1 L57.8,56.9 L58.3,58.5 L58.8,63.1 L59.2,69.9 L59.7,74.1 L60.2,77.1 L60.6,74.8 L61.1,67.6 L61.5,61.1 L62.0,56.4 L62.5,54.5 L62.9,59.0 L63.4,65.9 L63.9,73.1 L64.3,76.4 L64.8,74.6 L65.3,69.9 L65.7,64.0 L66.2,58.6 L66.7,56.4 L67.1,57.3 L67.6,63.5 L68.1,70.9 L68.5,75.1 L69.0,75.4 L69.5,73.7 L69.9,65.4 L70.4,59.1 L70.8,53.1 L71.3,54.9 L71.8,61.2 L72.2,69.2 L72.7,74.9 L73.2,76.8 L73.6,75.8 L74.1,68.1 L74.6,60.7 L75.0,56.4 L75.5,53.5 L76.0,58.3 L76.4,65.7 L76.9,73.5 L77.4,77.2 L77.8,78.4 L78.3,72.2 L78.8,64.2 L79.2,56.3 L79.7,54.5 L80.1,56.8 L80.6,63.5 L81.1,70.6 L81.5,75.8 L82.0,78.5 L82.5,74.5 L82.9,66.8 L83.4,57.6 L83.9,55.4 L84.3,55.9 L84.8,61.1 L85.3,69.5 L85.7,76.4 L86.2,79.6 L86.7,77.4 L87.1,68.8 L87.6,62.3 L88.0,56.9 L88.5,55.1 L89.0,59.7 L89.4,66.1 L89.9,74.2 L90.4,79.5 L90.8,77.7 L91.3,73.7 L91.8,66.1 L92.2,58.4 L92.7,57.2 L93.2,58.6 L93.6,64.4 L94.1,72.5 L94.6,77.9 L95.0,78.4 L95.5,75.6 L96.0,69.0 L96.4,63.5 L96.9,59.2 L97.4,61.4 L97.8,65.2 L98.3,72.7 L98.7,78.1 L99.2,81.2 L99.7,79.4 L100.1,75.2 L100.6,67.6 L101.1,62.9 L101.5,62.2 L102.0,66.9 L102.5,71.3 L102.9,78.8 L103.4,83.0 L103.9,80.5 L104.3,78.0 L104.8,71.7 L105.3,65.3 L105.7,63.4 L106.2,64.0 L106.7,69.7 L107.1,75.7 L107.6,78.9 L108.0,80.1 L108.5,77.3 L109.0,71.8 L109.4,66.3 L109.9,62.7 L110.4,62.9 L110.8,65.4 L111.3,70.7 L111.8,76.9 L112.2,78.4 L112.7,76.7 L113.2,72.9 L113.6,66.8 L114.1,63.1 L114.6,61.2 L115.0,62.7 L115.5,67.3 L116.0,72.3 L116.4,77.1 L116.9,75.2 L117.3,71.9 L117.8,67.3 L118.3,61.6 L118.7,59.3" fill="none" stroke="#3f9e6c" stroke-width="0.7" opacity="0.75"/><rect x="30" y="91.3" width="7" height="1.5" fill="#dcdcdc"/><rect x="55" y="91.3" width="7" height="1.5" fill="#dcdcdc"/><rect x="81" y="91.3" width="7" height="1.5" fill="#dcdcdc"/><rect x="106" y="91.3" width="7" height="1.5" fill="#dcdcdc"/><rect x="10" y="95.4" width="23" height="1.3" fill="#e6e6e6"/><rect x="95" y="95.4" width="23" height="1.3" fill="#e6e6e6"/></svg></div><div class="t " style="left:23.5px;top:334.3px;font-size:15px;color:#fff;transform:scaleY(1.12);transform-origin:0 84.65%;">2</div><svg style="left:131px;top:336.5px" width="16" height="11" viewBox="0 0 16 11"><path d="M1.8,2 L8,8 L14.2,2" fill="none" stroke="#86c3b3" stroke-width="3.2"/></svg><div style="position:absolute;left:23px;top:354.5px;width:125px;height:100px;background:#fff;overflow:hidden;"><svg style="left:0;top:0" width="125" height="100" viewBox="0 0 125 100"><rect x="95" y="13.5" width="19" height="2" fill="#4050a4" opacity="0.22"/><path d="M5.0,38.3 v-1.5 M6.0,38.3 v-1.6 M7.0,38.3 v-0.8 M8.0,38.3 v-1.7 M9.0,38.3 v-0.8 M10.0,38.3 v-1.3 M11.0,38.3 v-0.7 M12.0,38.3 v-1.4 M13.0,38.3 v-0.8 M14.0,38.3 v-3.7 M15.0,38.3 v-2.8 M16.0,38.3 v-26.0 M17.0,38.3 v-3.1 M18.0,38.3 v-3.7 M19.0,38.3 v-1.0 M20.0,38.3 v-0.9 M21.0,38.3 v-1.4 M22.0,38.3 v-0.7 M23.0,38.3 v-1.2 M24.0,38.3 v-1.3 M25.0,38.3 v-0.7 M26.0,38.3 v-0.9 M27.0,38.3 v-12.0 M28.0,38.3 v-1.0 M29.0,38.3 v-0.9 M30.0,38.3 v-1.2 M31.0,38.3 v-1.2 M32.0,38.3 v-0.8 M33.0,38.3 v-1.2 M34.0,38.3 v-0.6 M35.0,38.3 v-0.7 M36.0,38.3 v-3.0 M37.0,38.3 v-3.5 M38.0,38.3 v-1.7 M39.0,38.3 v-3.3 M40.0,38.3 v-2.2 M41.0,38.3 v-0.7 M42.0,38.3 v-0.7 M43.0,38.3 v-0.8 M44.0,38.3 v-0.9 M45.0,38.3 v-1.0 M46.0,38.3 v-0.6 M47.0,38.3 v-0.8 M48.0,38.3 v-0.9 M49.0,38.3 v-0.8 M50.0,38.3 v-0.8 M51.0,38.3 v-0.7 M52.0,38.3 v-0.8 M53.0,38.3 v-0.7 M54.0,38.3 v-0.8 M55.0,38.3 v-0.8 M56.0,38.3 v-0.7 M57.0,38.3 v-0.8 M58.0,38.3 v-0.7 M59.0,38.3 v-0.7 M60.0,38.3 v-0.8 M61.0,38.3 v-0.7 M62.0,38.3 v-0.6 M63.0,38.3 v-0.7 M64.0,38.3 v-0.7 M65.0,38.3 v-0.8 M66.0,38.3 v-0.7 M67.0,38.3 v-0.7 M68.0,38.3 v-0.6 M69.0,38.3 v-0.7 M70.0,38.3 v-0.7 M71.0,38.3 v-0.7 M72.0,38.3 v-0.8 M73.0,38.3 v-0.6 M74.0,38.3 v-0.8 M75.0,38.3 v-0.8 M76.0,38.3 v-0.8 M77.0,38.3 v-0.7 M78.0,38.3 v-0.7 M79.0,38.3 v-0.7 M80.0,38.3 v-0.7 M81.0,38.3 v-0.7 M82.0,38.3 v-0.7 M83.0,38.3 v-0.7 M84.0,38.3 v-0.7 M85.0,38.3 v-0.8 M86.0,38.3 v-0.8 M87.0,38.3 v-0.8 M88.0,38.3 v-0.6 M89.0,38.3 v-0.7 M90.0,38.3 v-0.7 M91.0,38.3 v-0.8 M92.0,38.3 v-0.7 M93.0,38.3 v-0.8 M94.0,38.3 v-0.8 M95.0,38.3 v-0.7 M96.0,38.3 v-0.7 M97.0,38.3 v-0.8 M98.0,38.3 v-0.7 M99.0,38.3 v-0.8 M100.0,38.3 v-0.7 M101.0,38.3 v-0.6 M102.0,38.3 v-0.7 M103.0,38.3 v-0.6 M104.0,38.3 v-0.8 M105.0,38.3 v-0.8 M106.0,38.3 v-0.7 M107.0,38.3 v-0.8 M108.0,38.3 v-0.7 M109.0,38.3 v-0.7 M110.0,38.3 v-0.6 M111.0,38.3 v-0.6 M112.0,38.3 v-0.8 M113.0,38.3 v-0.6 M114.0,38.3 v-0.8 M115.0,38.3 v-0.7 M116.0,38.3 v-0.8 M117.0,38.3 v-0.6" stroke="#4050a4" stroke-width="0.8" opacity="0.8"/><line x1="5" y1="38.6" x2="118" y2="38.6" stroke="#d6dcec" stroke-width="0.6"/><line x1="6.0" y1="46.5" x2="10.5" y2="40.5" stroke="#b0b6bc" stroke-width="0.7" opacity="0.55"/><line x1="9.8" y1="46.5" x2="14.3" y2="40.5" stroke="#b0b6bc" stroke-width="0.7" opacity="0.55"/><line x1="13.7" y1="46.5" x2="18.2" y2="40.5" stroke="#b0b6bc" stroke-width="0.7" opacity="0.55"/><line x1="17.6" y1="46.5" x2="22.1" y2="40.5" stroke="#b0b6bc" stroke-width="0.7" opacity="0.55"/><line x1="21.4" y1="46.5" x2="25.9" y2="40.5" stroke="#b0b6bc" stroke-width="0.7" opacity="0.55"/><line x1="25.2" y1="46.5" x2="29.8" y2="40.5" stroke="#b0b6bc" stroke-width="0.7" opacity="0.55"/><line x1="29.1" y1="46.5" x2="33.6" y2="40.5" stroke="#b0b6bc" stroke-width="0.7" opacity="0.55"/><line x1="33.0" y1="46.5" x2="37.5" y2="40.5" stroke="#b0b6bc" stroke-width="0.7" opacity="0.55"/><line x1="36.8" y1="46.5" x2="41.3" y2="40.5" stroke="#b0b6bc" stroke-width="0.7" opacity="0.55"/><line x1="40.6" y1="46.5" x2="45.1" y2="40.5" stroke="#b0b6bc" stroke-width="0.7" opacity="0.55"/><line x1="44.5" y1="46.5" x2="49.0" y2="40.5" stroke="#b0b6bc" stroke-width="0.7" opacity="0.55"/><line x1="48.4" y1="46.5" x2="52.9" y2="40.5" stroke="#b0b6bc" stroke-width="0.7" opacity="0.55"/><line x1="52.2" y1="46.5" x2="56.7" y2="40.5" stroke="#b0b6bc" stroke-width="0.7" opacity="0.55"/><line x1="56.1" y1="46.5" x2="60.6" y2="40.5" stroke="#b0b6bc" stroke-width="0.7" opacity="0.55"/><line x1="59.9" y1="46.5" x2="64.4" y2="40.5" stroke="#b0b6bc" stroke-width="0.7" opacity="0.55"/><line x1="63.8" y1="46.5" x2="68.2" y2="40.5" stroke="#b0b6bc" stroke-width="0.7" opacity="0.55"/><line x1="67.6" y1="46.5" x2="72.1" y2="40.5" stroke="#b0b6bc" stroke-width="0.7" opacity="0.55"/><line x1="71.5" y1="46.5" x2="76.0" y2="40.5" stroke="#b0b6bc" stroke-width="0.7" opacity="0.55"/><line x1="75.3" y1="46.5" x2="79.8" y2="40.5" stroke="#b0b6bc" stroke-width="0.7" opacity="0.55"/><line x1="79.2" y1="46.5" x2="83.7" y2="40.5" stroke="#b0b6bc" stroke-width="0.7" opacity="0.55"/><line x1="83.0" y1="46.5" x2="87.5" y2="40.5" stroke="#b0b6bc" stroke-width="0.7" opacity="0.55"/><line x1="86.9" y1="46.5" x2="91.4" y2="40.5" stroke="#b0b6bc" stroke-width="0.7" opacity="0.55"/><line x1="90.7" y1="46.5" x2="95.2" y2="40.5" stroke="#b0b6bc" stroke-width="0.7" opacity="0.55"/><line x1="94.5" y1="46.5" x2="99.0" y2="40.5" stroke="#b0b6bc" stroke-width="0.7" opacity="0.55"/><line x1="98.4" y1="46.5" x2="102.9" y2="40.5" stroke="#b0b6bc" stroke-width="0.7" opacity="0.55"/><line x1="102.2" y1="46.5" x2="106.8" y2="40.5" stroke="#b0b6bc" stroke-width="0.7" opacity="0.55"/><line x1="106.1" y1="46.5" x2="110.6" y2="40.5" stroke="#b0b6bc" stroke-width="0.7" opacity="0.55"/><line x1="110.0" y1="46.5" x2="114.5" y2="40.5" stroke="#b0b6bc" stroke-width="0.7" opacity="0.55"/><line x1="113.8" y1="46.5" x2="118.3" y2="40.5" stroke="#b0b6bc" stroke-width="0.7" opacity="0.55"/><line x1="117.7" y1="46.5" x2="122.2" y2="40.5" stroke="#b0b6bc" stroke-width="0.7" opacity="0.55"/><rect x="8.3" y="49.8" width="110.4" height="39" fill="#f7f7f8"/><rect x="96" y="55" width="19" height="2" fill="#3f9e6c" opacity="0.2"/><line x1="8.5" y1="50" x2="8.5" y2="89" stroke="#aab0d6" stroke-width="0.7"/><rect x="3" y="54" width="4" height="1.2" fill="#dde0ec"/><rect x="3" y="62" width="4" height="1.2" fill="#dde0ec"/><rect x="3" y="70" width="4" height="1.2" fill="#dde0ec"/><rect x="3" y="78" width="4" height="1.2" fill="#dde0ec"/><rect x="3" y="86" width="4" height="1.2" fill="#dde0ec"/><path d="M9.0,69.1 L9.5,62.1 L9.9,59.6 L10.4,61.3 L10.9,65.5 L11.3,72.3 L11.8,78.2 L12.3,81.4 L12.7,80.1 L13.2,73.5 L13.7,68.0 L14.1,63.4 L14.6,63.2 L15.0,67.4 L15.5,74.7 L16.0,81.2 L16.4,82.7 L16.9,81.9 L17.4,79.5 L17.8,72.8 L18.3,67.9 L18.8,65.2 L19.2,67.9 L19.7,70.4 L20.2,75.5 L20.6,80.3 L21.1,78.9 L21.6,77.0 L22.0,71.7 L22.5,65.8 L23.0,62.6 L23.4,61.5 L23.9,65.8 L24.3,69.8 L24.8,73.8 L25.3,76.7 L25.7,74.7 L26.2,69.4 L26.7,66.0 L27.1,60.2 L27.6,60.4 L28.1,62.3 L28.5,67.8 L29.0,71.9 L29.5,73.9 L29.9,76.4 L30.4,71.9 L30.9,65.9 L31.3,62.0 L31.8,58.7 L32.2,60.1 L32.7,66.2 L33.2,70.3 L33.6,73.8 L34.1,76.5 L34.6,74.0 L35.0,69.1 L35.5,62.6 L36.0,59.0 L36.4,59.2 L36.9,63.9 L37.4,68.2 L37.8,73.0 L38.3,76.2 L38.8,74.3 L39.2,70.1 L39.7,64.7 L40.2,60.2 L40.6,59.7 L41.1,61.9 L41.6,66.2 L42.0,72.4 L42.5,75.9 L42.9,76.5 L43.4,73.0 L43.9,66.4 L44.3,61.0 L44.8,58.0 L45.3,58.4 L45.7,64.5 L46.2,69.6 L46.7,75.4 L47.1,77.8 L47.6,75.3 L48.1,67.7 L48.5,61.5 L49.0,58.1 L49.5,57.6 L49.9,60.8 L50.4,67.1 L50.9,74.9 L51.3,75.6 L51.8,75.9 L52.2,70.2 L52.7,63.3 L53.2,59.1 L53.6,55.9 L54.1,58.7 L54.6,65.8 L55.0,73.4 L55.5,77.8 L56.0,76.6 L56.4,72.8 L56.9,66.6 L57.4,58.9 L57.8,53.9 L58.3,56.1 L58.8,61.7 L59.2,68.7 L59.7,76.6 L60.2,77.7 L60.6,74.8 L61.1,69.2 L61.5,60.9 L62.0,54.6 L62.5,54.8 L62.9,59.0 L63.4,66.0 L63.9,74.7 L64.3,77.5 L64.8,76.7 L65.3,71.5 L65.7,63.2 L66.2,56.0 L66.7,53.2 L67.1,57.5 L67.6,63.9 L68.1,71.8 L68.5,78.1 L69.0,77.7 L69.5,73.8 L69.9,65.5 L70.4,56.9 L70.8,55.0 L71.3,54.1 L71.8,59.8 L72.2,69.2 L72.7,76.2 L73.2,78.3 L73.6,76.6 L74.1,68.0 L74.6,61.4 L75.0,54.6 L75.5,54.0 L76.0,59.6 L76.4,65.5 L76.9,74.7 L77.4,76.4 L77.8,76.6 L78.3,71.8 L78.8,63.1 L79.2,58.6 L79.7,55.1 L80.1,56.9 L80.6,62.9 L81.1,70.9 L81.5,77.3 L82.0,77.1 L82.5,72.8 L82.9,66.5 L83.4,60.8 L83.9,55.6 L84.3,56.2 L84.8,60.7 L85.3,67.7 L85.7,74.9 L86.2,76.5 L86.7,75.0 L87.1,70.0 L87.6,63.2 L88.0,57.8 L88.5,56.8 L89.0,61.4 L89.4,66.0 L89.9,72.1 L90.4,77.5 L90.8,74.9 L91.3,71.2 L91.8,66.7 L92.2,60.5 L92.7,55.9 L93.2,60.8 L93.6,65.9 L94.1,72.4 L94.6,76.8 L95.0,77.4 L95.5,74.4 L96.0,70.2 L96.4,64.6 L96.9,58.4 L97.4,62.2 L97.8,66.7 L98.3,70.6 L98.7,76.8 L99.2,79.5 L99.7,78.5 L100.1,73.4 L100.6,68.0 L101.1,62.3 L101.5,64.0 L102.0,65.9 L102.5,71.6 L102.9,76.6 L103.4,80.6 L103.9,80.4 L104.3,76.7 L104.8,72.1 L105.3,64.5 L105.7,64.6 L106.2,65.6 L106.7,69.9 L107.1,73.9 L107.6,78.5 L108.0,79.7 L108.5,76.8 L109.0,72.3 L109.4,66.4 L109.9,62.0 L110.4,63.9 L110.8,66.5 L111.3,70.8 L111.8,75.4 L112.2,76.1 L112.7,75.6 L113.2,71.4 L113.6,67.3 L114.1,61.4 L114.6,61.2 L115.0,63.3 L115.5,67.1 L116.0,72.9 L116.4,76.4 L116.9,75.2 L117.3,73.5 L117.8,67.9 L118.3,61.5 L118.7,58.3" fill="none" stroke="#3f9e6c" stroke-width="0.7" opacity="0.75"/><rect x="30" y="91.3" width="7" height="1.5" fill="#dcdcdc"/><rect x="55" y="91.3" width="7" height="1.5" fill="#dcdcdc"/><rect x="81" y="91.3" width="7" height="1.5" fill="#dcdcdc"/><rect x="106" y="91.3" width="7" height="1.5" fill="#dcdcdc"/><rect x="10" y="95.4" width="23" height="1.3" fill="#e6e6e6"/><rect x="95" y="95.4" width="23" height="1.3" fill="#e6e6e6"/></svg></div><div class="t " style="left:23.5px;top:459.9px;font-size:15px;color:#fff;transform:scaleY(1.12);transform-origin:0 84.65%;">3</div><svg style="left:131px;top:462.1px" width="16" height="11" viewBox="0 0 16 11"><path d="M1.8,2 L8,8 L14.2,2" fill="none" stroke="#86c3b3" stroke-width="3.2"/></svg><div style="position:absolute;left:23px;top:480.1px;width:125px;height:100px;background:#fff;overflow:hidden;"><svg style="left:0;top:0" width="125" height="100" viewBox="0 0 125 100"><rect x="96" y="8" width="20" height="2" fill="#dde" opacity="0.6"/><rect x="8" y="10" width="0.8" height="82" fill="#ececf3"/><rect x="9" y="17" width="108.5" height="18" fill="#dcdff1" opacity="0.9"/><path d="M9.0,18.0 L9.5,34.4 L10.0,16.4 L10.5,36.7 L11.0,17.4 L11.5,34.4 L12.0,17.1 L12.5,37.0 L13.0,17.4 L13.5,37.0 L14.0,15.4 L14.5,34.5 L15.0,15.9 L15.5,35.8 L16.0,16.3 L16.5,38.0 L17.0,17.6 L17.5,34.1 L18.0,14.2 L18.5,35.6 L19.0,17.2 L19.5,35.3 L20.0,16.5 L20.5,37.8 L21.0,17.2 L21.5,34.9 L22.0,15.7 L22.5,36.2 L23.0,14.2 L23.5,37.4 L24.0,16.6 L24.5,34.8 L25.0,14.7 L25.5,38.0 L26.0,17.9 L26.5,36.9 L27.0,14.5 L27.5,36.6 L28.0,17.1 L28.5,37.2 L29.0,15.1 L29.5,34.8 L30.0,15.4 L30.5,34.9 L31.0,17.8 L31.5,35.3 L32.0,16.7 L32.5,35.6 L33.0,15.4 L33.5,37.3 L34.0,14.2 L34.5,37.9 L35.0,14.0 L35.5,37.2 L36.0,16.8 L36.5,34.7 L37.0,15.5 L37.5,36.2 L38.0,15.3 L38.5,34.4 L39.0,17.2 L39.5,37.7 L40.0,15.6 L40.5,36.8 L41.0,17.6 L41.5,35.6 L42.0,14.4 L42.5,36.6 L43.0,14.0 L43.5,34.8 L44.0,16.2 L44.5,37.2 L45.0,16.2 L45.5,37.2 L46.0,15.8 L46.5,34.5 L47.0,17.6 L47.5,37.9 L48.0,17.5 L48.5,34.8 L49.0,16.7 L49.5,36.9 L50.0,14.6 L50.5,35.9 L51.0,16.0 L51.5,37.2 L52.0,16.9 L52.5,35.5 L53.0,15.5 L53.5,36.5 L54.0,17.8 L54.5,34.4 L55.0,17.4 L55.5,36.9 L56.0,15.2 L56.5,37.9 L57.0,14.9 L57.5,35.0 L58.0,14.9 L58.5,37.9 L59.0,16.6 L59.5,34.0 L60.0,16.5 L60.5,35.1 L61.0,17.3 L61.5,34.2 L62.0,17.5 L62.5,37.5 L63.0,17.8 L63.5,36.5 L64.0,17.2 L64.5,34.8 L65.0,14.7 L65.5,35.2 L66.0,17.3 L66.5,35.8 L67.0,15.2 L67.5,36.1 L68.0,14.6 L68.5,35.6 L69.0,15.9 L69.5,36.9 L70.0,16.2 L70.5,36.9 L71.0,16.1 L71.5,34.5 L72.0,17.5 L72.5,37.1 L73.0,15.0 L73.5,37.8 L74.0,15.2 L74.5,36.3 L75.0,17.3 L75.5,37.4 L76.0,17.5 L76.5,35.7 L77.0,17.4 L77.5,35.5 L78.0,16.8 L78.5,35.7 L79.0,15.2 L79.5,36.2 L80.0,17.0 L80.5,37.1 L81.0,15.1 L81.5,37.3 L82.0,17.9 L82.5,36.5 L83.0,14.4 L83.5,35.0 L84.0,17.2 L84.5,37.3 L85.0,16.5 L85.5,35.6 L86.0,14.7 L86.5,35.5 L87.0,17.2 L87.5,34.9 L88.0,16.6 L88.5,36.8 L89.0,16.5 L89.5,37.1 L90.0,17.7 L90.5,35.0 L91.0,15.5 L91.5,35.9 L92.0,16.0 L92.5,37.7 L93.0,16.9 L93.5,34.7 L94.0,17.9 L94.5,35.9 L95.0,16.8 L95.5,35.9 L96.0,18.0 L96.5,34.0 L97.0,16.5 L97.5,37.0 L98.0,16.8 L98.5,37.7 L99.0,15.7 L99.5,35.6 L100.0,14.9 L100.5,34.9 L101.0,15.6 L101.5,37.4 L102.0,15.8 L102.5,35.3 L103.0,17.6 L103.5,36.3 L104.0,17.2 L104.5,35.5 L105.0,15.8 L105.5,37.8 L106.0,15.3 L106.5,36.1 L107.0,14.6 L107.5,35.2 L108.0,16.4 L108.5,36.7 L109.0,15.8 L109.5,34.9 L110.0,16.4 L110.5,37.3 L111.0,17.0 L111.5,36.8 L112.0,17.8 L112.5,37.8 L113.0,15.3 L113.5,35.3 L114.0,14.1 L114.5,37.2 L115.0,17.8 L115.5,35.0 L116.0,16.0 L116.5,38.0" fill="none" stroke="#d6d9ef" stroke-width="0.8"/><path d="M7.0,61.8 L8.2,59.8 L9.4,58.4 L10.6,56.2 L12.1,60.4 L13.7,64.2 L15.2,67.7 L16.4,67.1 L17.6,66.7 L18.8,67.8 L20.0,67.1 L21.2,67.0 L22.4,66.9 L23.8,60.8 L25.1,54.8 L26.5,58.6 L27.9,62.3 L29.2,65.5 L30.6,69.1 L32.0,69.8 L33.3,72.0 L34.6,71.6 L36.0,73.3 L37.2,70.9 L38.5,66.9 L39.7,64.0 L41.0,66.3 L42.3,69.3 L43.6,71.1 L44.8,73.5 L46.1,74.5 L47.4,77.8 L48.7,79.5 L50.0,75.6 L51.3,72.3 L52.6,68.3 L53.9,64.7 L55.2,60.6 L56.5,56.9 L57.8,52.3 L59.1,54.9 L60.4,57.7 L61.7,59.6 L63.0,61.5 L64.4,64.6 L65.7,67.5 L67.0,69.9 L68.3,71.2 L69.6,74.0 L70.8,68.0 L72.1,62.4 L73.3,57.6 L74.5,59.4 L75.8,61.8 L77.0,64.4 L78.2,67.3 L79.5,70.2 L80.7,72.3 L82.0,74.7 L83.2,77.4 L84.4,74.4 L85.6,72.4 L86.8,68.2 L88.1,66.1 L89.3,62.1 L90.5,60.2 L91.8,61.8 L93.0,65.1 L94.2,67.1 L95.5,69.0 L96.8,71.5 L98.0,75.1 L99.2,77.2 L100.5,79.6 L101.9,75.1 L103.2,71.3 L104.6,66.7 L106.0,61.7 L107.5,66.2 L109.0,69.3 L110.5,73.8 L111.0,69.8 L111.4,66.6 L112.7,69.0 L113.9,73.3 L115.2,76.6 L116.4,80.4 L117.7,83.2" fill="none" stroke="#ead0ea" stroke-width="1.8"/><path d="M97,52 L110,39.5 L115,44.5 L102,57 L96,58 Z" fill="#a9dcc8"/><path d="M98,53.5 L100.5,56" stroke="#fff" stroke-width="1"/><rect x="14" y="90" width="7" height="1.5" fill="#ececec"/><rect x="29" y="90" width="7" height="1.5" fill="#ececec"/><rect x="44" y="90" width="7" height="1.5" fill="#ececec"/><rect x="59" y="90" width="7" height="1.5" fill="#ececec"/><rect x="74" y="90" width="7" height="1.5" fill="#ececec"/><rect x="89" y="90" width="7" height="1.5" fill="#ececec"/><rect x="104" y="90" width="7" height="1.5" fill="#ececec"/></svg></div><div class="t " style="left:23.5px;top:585.5px;font-size:15px;color:#fff;transform:scaleY(1.12);transform-origin:0 84.65%;">4</div><svg style="left:131px;top:587.7px" width="16" height="11" viewBox="0 0 16 11"><path d="M1.8,2 L8,8 L14.2,2" fill="none" stroke="#86c3b3" stroke-width="3.2"/></svg><div style="position:absolute;left:23px;top:605.7px;width:125px;height:100px;background:#fff;overflow:hidden;"><svg style="left:0;top:0" width="125" height="100" viewBox="0 0 125 100"><rect x="5.5" y="3.5" width="111.5" height="40.5" fill="#f5f5f8"/><rect x="100" y="8" width="14" height="2" fill="#8890c0" opacity="0.5"/><rect x="8" y="6" width="0.8" height="82" fill="#b4b9dc"/><path d="M7.0,21.4 L8.2,19.3 L9.4,17.9 L10.6,15.0 L12.1,19.6 L13.7,22.8 L15.2,26.8 L16.4,25.9 L17.6,26.1 L18.8,25.8 L20.0,25.7 L21.2,26.2 L22.4,25.7 L23.8,20.1 L25.1,13.1 L26.5,16.4 L27.9,20.9 L29.2,24.6 L30.6,27.8 L32.0,29.3 L33.3,29.4 L34.6,30.9 L36.0,32.1 L37.2,29.3 L38.5,26.7 L39.7,23.2 L41.0,24.4 L42.3,27.4 L43.6,29.2 L44.8,32.2 L46.1,34.6 L47.4,35.5 L48.7,38.8 L50.0,34.2 L51.3,30.1 L52.6,26.7 L53.9,22.7 L55.2,18.6 L56.5,14.7 L57.8,11.1 L59.1,13.9 L60.4,15.5 L61.7,18.3 L63.0,20.5 L64.4,23.7 L65.7,25.3 L67.0,28.5 L68.3,29.8 L69.6,33.6 L70.8,27.1 L72.1,22.2 L73.3,16.2 L74.5,18.9 L75.8,20.2 L77.0,23.9 L78.2,26.2 L79.5,29.4 L80.7,31.5 L82.0,33.7 L83.2,37.2 L84.4,34.4 L85.6,30.1 L86.8,27.0 L88.1,24.4 L89.3,21.8 L90.5,18.0 L91.8,21.1 L93.0,23.5 L94.2,26.4 L95.5,27.9 L96.8,30.4 L98.0,33.5 L99.2,36.3 L100.5,38.5 L101.9,34.5 L103.2,29.4 L104.6,24.8 L106.0,21.5 L107.5,25.0 L109.0,27.6 L110.5,31.3 L111.0,28.8 L111.4,25.3 L112.7,27.9 L113.9,31.4 L115.2,35.1 L116.4,37.8 L117.7,42.0" fill="none" stroke="#3f4fa8" stroke-width="3" stroke-linejoin="round"/><rect x="86" y="52" width="28" height="2" fill="#3a9a64" opacity="0.4"/><path d="M7.0,61.5 L8.2,59.3 L9.4,57.3 L10.6,55.5 L12.1,60.1 L13.7,63.2 L15.2,67.2 L16.4,67.6 L17.6,67.2 L18.8,67.6 L20.0,66.8 L21.2,66.5 L22.4,66.7 L23.8,59.3 L25.1,53.7 L26.5,56.9 L27.9,61.0 L29.2,65.5 L30.6,68.8 L32.0,70.5 L33.3,71.8 L34.6,71.9 L36.0,73.9 L37.2,70.0 L38.5,67.2 L39.7,63.6 L41.0,65.8 L42.3,67.9 L43.6,69.8 L44.8,72.5 L46.1,76.1 L47.4,77.7 L48.7,79.9 L50.0,76.5 L51.3,71.9 L52.6,68.3 L53.9,63.2 L55.2,58.9 L56.5,55.9 L57.8,50.6 L59.1,54.1 L60.4,56.4 L61.7,59.6 L63.0,62.1 L64.4,64.2 L65.7,65.8 L67.0,68.3 L68.3,71.6 L69.6,74.7 L70.8,67.4 L72.1,61.9 L73.3,55.2 L74.5,58.3 L75.8,60.6 L77.0,63.9 L78.2,67.0 L79.5,69.2 L80.7,72.9 L82.0,74.5 L83.2,77.6 L84.4,74.4 L85.6,71.5 L86.8,68.9 L88.1,65.0 L89.3,62.3 L90.5,59.5 L91.8,60.9 L93.0,64.7 L94.2,66.9 L95.5,69.8 L96.8,72.2 L98.0,74.5 L99.2,76.6 L100.5,79.4 L101.9,74.9 L103.2,70.3 L104.6,65.7 L106.0,61.2 L107.5,65.6 L109.0,69.8 L110.5,73.6 L111.0,70.0 L111.4,65.1 L112.7,69.8 L113.9,72.4 L115.2,75.9 L116.4,79.8 L117.7,83.7" fill="none" stroke="#49a776" stroke-width="0.8"/><rect x="12" y="89" width="7" height="1.5" fill="#cfcfcf"/><rect x="27" y="89" width="7" height="1.5" fill="#cfcfcf"/><rect x="42" y="89" width="7" height="1.5" fill="#cfcfcf"/><rect x="57" y="89" width="7" height="1.5" fill="#cfcfcf"/><rect x="72" y="89" width="7" height="1.5" fill="#cfcfcf"/><rect x="87" y="89" width="7" height="1.5" fill="#cfcfcf"/><rect x="102" y="89" width="7" height="1.5" fill="#cfcfcf"/><rect x="12" y="94" width="22" height="1.5" fill="#e0e0e0"/><rect x="90" y="94" width="22" height="1.5" fill="#e0e0e0"/></svg></div><div class="t " style="left:23.5px;top:711.1px;font-size:15px;color:#fff;transform:scaleY(1.12);transform-origin:0 84.65%;">5</div><svg style="left:131px;top:713.3px" width="16" height="11" viewBox="0 0 16 11"><path d="M1.8,2 L8,8 L14.2,2" fill="none" stroke="#86c3b3" stroke-width="3.2"/></svg><div style="position:absolute;left:6.2px;top:480.3px;width:12.7px;height:100px;background:#f7ab22;"></div><div style="position:absolute;left:163px;top:54px;width:13px;height:1212px;background:#e1e1e1;border-left:1px solid #b0b0b0;border-right:1px solid #9b9b9b;box-sizing:border-box;"></div><div style="position:absolute;left:600px;top:54px;width:14px;height:1212px;background:#e1e1e1;border-left:1px solid #9b9b9b;border-right:1px solid #9b9b9b;box-sizing:border-box;"></div><svg style="left:165px;top:657.5px" width="10" height="10" viewBox="0 0 10 10"><path d="M5,1 L1,5 L5,9 M9,1 L5,5 L9,9" fill="none" stroke="#444" stroke-width="1.3"/></svg><svg style="left:602.5px;top:657.5px" width="10" height="10" viewBox="0 0 10 10"><path d="M5,1 L1,5 L5,9 M9,1 L5,5 L9,9" fill="none" stroke="#444" stroke-width="1.3"/></svg><div style="position:absolute;left:176px;top:54px;width:424px;height:1212px;background:#f6f6f6;"></div><div style="position:absolute;left:176px;top:54.5px;width:133px;height:43.5px;background:#e8e8e8;border-radius:3px 3px 0 0;"></div><div style="position:absolute;left:445px;top:54.5px;width:155px;height:43.5px;background:#e8e8e8;border-radius:3px 3px 0 0;"></div><div style="position:absolute;left:308px;top:55px;width:1px;height:43px;background:#d8d8d8;"></div><svg style="left:192px;top:67px" width="16" height="19" viewBox="0 0 16 19"><g fill="#007960">
<ellipse cx="7.6" cy="3.4" rx="6.9" ry="2.6"/>
<path d="M0.7,5.6 Q7.6,9.6 14.5,5.6 V8.6 Q7.6,12.4 0.7,8.6 Z"/>
<path d="M0.7,10 Q7.6,14 14.5,10 V13 Q7.6,16.8 0.7,13 Z"/>
<path d="M0.7,14.4 Q7.6,18.4 14.5,14.4 V15.6 Q14.5,17.8 7.6,17.8 Q0.7,17.8 0.7,15.6 Z"/></g></svg><div class="t " style="left:227.6px;top:71.1px;font-size:14.8px;color:#222;transform:scaleY(1.12);transform-origin:0 84.65%;">Data</div><svg style="left:324px;top:68px" width="18" height="18" viewBox="0 0 18 18">
<path d="M2,16 L9.5,8.5" stroke="#007960" stroke-width="3.4" stroke-linecap="round"/>
<path d="M8.2,6.6 A5,5 0 0 1 15.5,1.4 L12.6,4.4 L13.7,5.6 L16.6,2.7 A5,5 0 0 1 11.3,9.7 Z" fill="#007960"/></svg><div class="t " style="left:360.0px;top:70.9px;font-size:15.2px;color:#222;transform:scaleY(1.12);transform-origin:0 84.65%;">Tools</div><svg style="left:461px;top:68px" width="19" height="18" viewBox="0 0 19 18">
<path d="M4,1 H18 L15,15 H2 Z" fill="#007960"/><path d="M2,15 Q1,17 3,17.2 H15" fill="none" stroke="#007960" stroke-width="1.6"/>
<path d="M7,4.5 H14.5 M6.4,7.2 H14" stroke="#e8e8e8" stroke-width="1.2"/></svg><div class="t " style="left:496.0px;top:70.6px;font-size:15.8px;color:#222;transform:scaleY(1.12);transform-origin:0 84.65%;">Journal</div><svg style="left:194px;top:124px" width="16" height="16" viewBox="0 0 16 16"><circle cx="6.4" cy="6.4" r="4.8" fill="none" stroke="#666" stroke-width="2"/><path d="M10,10 L14.5,14.5" stroke="#666" stroke-width="2.4" stroke-linecap="round"/></svg><div class="t " style="left:219.0px;top:125.4px;font-size:15.3px;color:#9a9a9a;transform:scaleY(1.12);transform-origin:0 84.65%;">Filter tools...</div><div style="position:absolute;left:191px;top:151.5px;width:394px;height:1px;background:#e3e3e3;"></div><svg style="left:188px;top:169px" width="20" height="17" viewBox="0 0 20 17"><path d="M10,0.8 L19.2,9 H16.6 V16.6 H11.8 V11.4 H8.2 V16.6 H3.4 V9 H0.8 Z" fill="#007960"/><rect x="14" y="1.5" width="2.4" height="4.5" fill="#007960"/></svg><div class="t " style="left:211.0px;top:171.2px;font-size:15.2px;color:#2a7d6c;transform:scaleY(1.12);transform-origin:0 84.65%;">Overview</div><div class="t " style="left:277.3px;top:171.4px;font-size:14.75px;color:#555;transform:scaleY(1.12);transform-origin:0 84.65%;">» Frequency Analysis</div><div style="position:absolute;left:188.5px;top:203.5px;width:400.5px;height:640.5px;background:#fff;border:1px solid #b9d9d0;border-radius:4px;box-sizing:border-box;box-shadow:0 1px 2px rgba(0,0,0,0.12);"></div><svg style="left:204px;top:222px" width="34" height="34" viewBox="204 222 34 34"><g fill="#007960">
<rect x="208.7" y="244.3" width="2.8" height="8.3"/><rect x="214.2" y="239.5" width="2.7" height="13.1"/><rect x="219.8" y="233.8" width="3" height="18.8"/><rect x="225.2" y="239.5" width="2.7" height="13.1"/><rect x="230.6" y="244.3" width="2.9" height="8.3"/></g>
<path d="M208.4,239.7 C211,238.8 212.5,237 214.5,233 C216.5,229 218,227.8 221,227.8 C224,227.8 225.5,229 227.5,233 C229.5,237 231,238.8 234.1,239.7" fill="none" stroke="#007960" stroke-width="2.9"/></svg><div style="position:absolute;left:240px;top:225px;width:281px;height:37.5px;background:#fff;border:1px solid #b8d7ce;border-right:none;border-radius:4px 0 0 4px;box-sizing:border-box;"></div><div style="position:absolute;left:521px;top:225px;width:47px;height:37.5px;background:#ececec;border-radius:0 4px 4px 0;"></div><div style="position:absolute;left:536px;top:233.6px;width:19px;height:18.6px;background:#901f90;border:1px solid #6a156a;box-sizing:border-box;"></div><div style="position:absolute;left:248px;top:230.5px;width:115px;height:25px;background:#3390ff;"></div><div class="t " style="left:248.5px;top:234.9px;font-size:17.4px;color:#fff;transform:scaleY(1.12);transform-origin:0 84.65%;">Press-avg FFT</div><svg style="left:208.6px;top:286px" width="18" height="14" viewBox="0 0 18 14"><path d="M2.2,6.8 L7,11.4 L16,1.8" fill="none" stroke="#007960" stroke-width="3.7" stroke-linecap="round" stroke-linejoin="round"/></svg><svg style="left:208.6px;top:375px" width="18" height="14" viewBox="0 0 18 14"><path d="M2.2,6.8 L7,11.4 L16,1.8" fill="none" stroke="#007960" stroke-width="3.7" stroke-linecap="round" stroke-linejoin="round"/></svg><svg style="left:208.6px;top:431.5px" width="18" height="14" viewBox="0 0 18 14"><path d="M2.2,6.8 L7,11.4 L16,1.8" fill="none" stroke="#007960" stroke-width="3.7" stroke-linecap="round" stroke-linejoin="round"/></svg><svg style="left:208.6px;top:517.5px" width="18" height="14" viewBox="0 0 18 14"><path d="M2.2,6.8 L7,11.4 L16,1.8" fill="none" stroke="#007960" stroke-width="3.7" stroke-linecap="round" stroke-linejoin="round"/></svg><svg style="left:208.6px;top:605.5px" width="18" height="14" viewBox="0 0 18 14"><path d="M2.2,6.8 L7,11.4 L16,1.8" fill="none" stroke="#007960" stroke-width="3.7" stroke-linecap="round" stroke-linejoin="round"/></svg><svg style="left:208.6px;top:693px" width="18" height="14" viewBox="0 0 18 14"><path d="M2.2,6.8 L7,11.4 L16,1.8" fill="none" stroke="#007960" stroke-width="3.7" stroke-linecap="round" stroke-linejoin="round"/></svg><svg style="left:208.6px;top:742.5px" width="18" height="14" viewBox="0 0 18 14"><path d="M2.2,6.8 L7,11.4 L16,1.8" fill="none" stroke="#007960" stroke-width="3.7" stroke-linecap="round" stroke-linejoin="round"/></svg><div class="t " style="left:245.3px;top:287.3px;font-size:14.9px;color:#333;transform:scaleY(1.12);transform-origin:0 84.65%;">Select signal to analyze</div><div style="position:absolute;left:249.4px;top:309.6px;width:315.3px;height:40px;background:#fff;border:1px solid #cfcfcf;border-radius:4px;box-sizing:border-box;"></div><svg style="left:264px;top:321px" width="18" height="17" viewBox="0 0 18 17"><path d="M1,15 L4.5,2 L8,13 L10.5,5 L13.5,14 L15,10" fill="none" stroke="#3d4fa0" stroke-width="1.8" stroke-linejoin="round"/></svg><div class="t " style="left:288.0px;top:317.5px;font-size:14.6px;color:#222;transform:scaleY(1.12);transform-origin:0 84.65%;"><b>Press_hpf</b> <i style="font-size:13px;color:#444">(psi)</i></div><div class="t " style="left:288.5px;top:335.9px;font-size:10.6px;color:#444;transform:scaleY(1.12);transform-origin:0 84.65%;"><i>mple-AF » All Areas » Pi World Barcelona » Pump 1</i></div><svg style="left:540.5px;top:325px" width="11" height="7" viewBox="0 0 11 7"><path d="M0.5,0.5 H10.5 L5.5,6.5 Z" fill="#333"/></svg><svg style="left:267.5px;top:379px" width="16" height="16" viewBox="0 0 16 16"><circle cx="8" cy="8" r="7.2" fill="#2a2a2a"/><path d="M4.4,8.2 L6.8,10.6 L11.6,5.6" fill="none" stroke="#fff" stroke-width="2"/></svg><div class="t " style="left:290.4px;top:380.4px;font-size:14.8px;color:#333;transform:scaleY(1.12);transform-origin:0 84.65%;">Period</div><svg style="left:351px;top:379px" width="16" height="16" viewBox="0 0 16 16"><circle cx="8" cy="8" r="6.3" fill="#fff" stroke="#333" stroke-width="1.4"/></svg><div class="t " style="left:374.0px;top:380.3px;font-size:15.0px;color:#333;transform:scaleY(1.12);transform-origin:0 84.65%;">Frequency</div><div class="t " style="left:251.7px;top:438.3px;font-size:15.0px;color:#333;transform:scaleY(1.12);transform-origin:0 84.65%;">Select a sampling rate</div><div style="position:absolute;left:245.3px;top:456.6px;width:160.2px;height:37.4px;background:#fff;border:1px solid #cfcfcf;border-radius:4px;box-sizing:border-box;"></div><div style="position:absolute;left:307px;top:456.6px;width:1px;height:37.4px;background:#cfcfcf;"></div><div class="t " style="left:-225.5px;width:1000px;text-align:center;top:469.0px;font-size:13.5px;color:#444;transform:scaleY(1.12);transform-origin:0 84.65%;">10</div><div class="t " style="left:320.6px;top:468.9px;font-size:13.6px;color:#333;transform:scaleY(1.12);transform-origin:0 84.65%;">second(s)</div><svg style="left:384px;top:473px" width="9" height="6" viewBox="0 0 9 6"><path d="M0.5,0.5 H8.5 L4.5,5 Z" fill="#222"/></svg><div class="t " style="left:245.3px;top:517.8px;font-size:15.0px;color:#333;transform:scaleY(1.12);transform-origin:0 84.65%;">Output units</div><div style="position:absolute;left:245.2px;top:542.5px;width:109.5px;height:41px;background:#fff;border:1px solid #cfcfcf;border-radius:4px;box-sizing:border-box;"></div><div class="t " style="left:261.6px;top:556.4px;font-size:14.3px;color:#333;transform:scaleY(1.12);transform-origin:0 84.65%;">minute(s)</div><svg style="left:330px;top:561px" width="9" height="6" viewBox="0 0 9 6"><path d="M0.5,0.5 H8.5 L4.5,5 Z" fill="#222"/></svg><svg style="left:249.5px;top:609.3px" width="15" height="15" viewBox="0 0 15 15"><rect x="0.5" y="0.5" width="13.6" height="13.8" rx="2" fill="#2a2a2a"/><path d="M3.4,7.4 L6,10 L11.2,4.4" fill="none" stroke="#fff" stroke-width="2"/></svg><div class="t " style="left:275.2px;top:610.2px;font-size:15.15px;color:#333;transform:scaleY(1.12);transform-origin:0 84.65%;">Remove periods below (right of)</div><div style="position:absolute;left:245.2px;top:633px;width:322.4px;height:36px;background:#fff;border:1px solid #cfcfcf;border-radius:4px;box-sizing:border-box;"></div><div style="position:absolute;left:469px;top:633px;width:1px;height:36px;background:#cfcfcf;"></div><div class="t " style="right:2114.5px;top:644.8px;font-size:13.8px;color:#444;transform:scaleY(1.12);transform-origin:0 84.65%;">2</div><div class="t " style="left:483.0px;top:644.8px;font-size:13.9px;color:#333;transform:scaleY(1.12);transform-origin:0 84.65%;">minute(s)</div><svg style="left:548px;top:649px" width="9" height="6" viewBox="0 0 9 6"><path d="M0.5,0.5 H8.5 L4.5,5 Z" fill="#222"/></svg><svg style="left:249.5px;top:696.5px" width="15" height="15" viewBox="0 0 15 15"><rect x="1" y="1" width="12.4" height="12.4" rx="2" fill="#fff" stroke="#333" stroke-width="1.4"/></svg><div class="t " style="left:275.2px;top:697.2px;font-size:15.15px;color:#333;transform:scaleY(1.12);transform-origin:0 84.65%;">Remove periods above (left of)</div><svg style="left:249.5px;top:746.5px" width="15" height="15" viewBox="0 0 15 15"><rect x="1" y="1" width="12.4" height="12.4" rx="2" fill="#fff" stroke="#333" stroke-width="1.4"/></svg><div class="t " style="left:275.2px;top:747.2px;font-size:15.13px;color:#333;transform:scaleY(1.12);transform-origin:0 84.65%;">Available outside this analysis</div><div style="position:absolute;left:249px;top:793.8px;width:124.7px;height:36.5px;background:#fff;border:1px solid #cdcdcd;border-radius:4px;box-sizing:border-box;"></div><div class="t " style="left:-188.7px;width:1000px;text-align:center;top:805.9px;font-size:13.6px;color:#333;transform:scaleY(1.12);transform-origin:0 84.65%;">Cancel</div><div style="position:absolute;left:402px;top:793.8px;width:125px;height:36.5px;background:#007960;border-radius:4px;"></div><div class="t " style="left:-35.5px;width:1000px;text-align:center;top:805.9px;font-size:13.6px;color:#fff;transform:scaleY(1.12);transform-origin:0 84.65%;font-weight:bold;letter-spacing:-0.2px;">Execute</div><div style="position:absolute;left:188.5px;top:1138px;width:399.5px;height:125.6px;background:#fff;border:1px solid #b9d9d0;border-radius:5px;box-sizing:border-box;"></div><div class="t " style="left:195.0px;top:1143.4px;font-size:17.0px;color:#2a7d6c;transform:scaleY(1.12);transform-origin:0 84.65%;">Derived Data</div><div class="t " style="left:195.0px;top:1164.2px;font-size:11.3px;color:#9a9a9a;transform:scaleY(1.12);transform-origin:0 84.65%;">View data created by tools in a dependency tree</div><div style="position:absolute;left:189.5px;top:1181.5px;width:397.5px;height:1.4px;background:#dedede;"></div><svg style="left:561px;top:1152px" width="16" height="11" viewBox="0 0 16 11"><path d="M1.6,2 L8,8.2 L14.4,2" fill="none" stroke="#007960" stroke-width="3"/></svg><svg style="left:201px;top:1191px" width="19" height="18" viewBox="0 0 19 18"><path d="M1,0.5 V17 H18" fill="none" stroke="#9a2a9a" stroke-width="1.8"/><rect x="4.4" y="9" width="3" height="7" fill="#9a2a9a"/><rect x="9" y="2.5" width="3" height="13.5" fill="#9a2a9a"/><rect x="13.6" y="6" width="3" height="10" fill="#9a2a9a"/></svg><div class="t " style="left:224.5px;top:1193.1px;font-size:14.4px;color:#2a7d6c;transform:scaleY(1.12);transform-origin:0 84.65%;text-decoration:underline;text-decoration-color:#7fb8a8;text-underline-offset:2px;">Press-avg FFT</div><svg style="left:205px;top:1211px" width="16" height="13" viewBox="0 0 16 13"><path d="M1,0 V11.5 H14" fill="none" stroke="#ccc" stroke-width="1"/></svg><svg style="left:226px;top:1214px" width="19" height="17" viewBox="0 0 19 17"><path d="M1,14 L4.6,1.5 L8.6,13 L11.4,6 L14.6,15 L17,11" fill="none" stroke="#3d4fa0" stroke-width="1.9" stroke-linejoin="round"/></svg><div class="t " style="left:249.0px;top:1216.0px;font-size:14.6px;color:#2a7d6c;transform:scaleY(1.12);transform-origin:0 84.65%;text-decoration:underline;text-decoration-color:#7fb8a8;text-underline-offset:2px;">Press_hpf</div><svg style="left:233px;top:1234px" width="16" height="13" viewBox="0 0 16 13"><path d="M1,0 V11.5 H14" fill="none" stroke="#ccc" stroke-width="1"/></svg><svg style="left:253.5px;top:1237px" width="19" height="17" viewBox="0 0 19 17"><path d="M1,14 L4.6,1.5 L8.6,13 L11.4,6 L14.6,15 L17,11" fill="none" stroke="#111" stroke-width="1.9" stroke-linejoin="round"/></svg><svg style="left:277.5px;top:1238px" width="19" height="16" viewBox="0 0 19 16"><path d="M1,0.5 V15 H18" fill="none" stroke="#1d6f5f" stroke-width="1.6"/><path d="M3,14 V8 L7,4.5 L10,8 L14,3.5 L17,7.5 V14 Z" fill="#1d6f5f"/></svg><div class="t " style="left:301.6px;top:1239.0px;font-size:14.6px;color:#2a7d6c;transform:scaleY(1.12);transform-origin:0 84.65%;text-decoration:underline;text-decoration-color:#7fb8a8;text-underline-offset:2px;">Press</div><div style="position:absolute;left:614px;top:54px;width:1944px;height:62px;background:#f6f6f6;border-bottom:1px solid #e6e6e6;box-sizing:border-box;"></div><div style="position:absolute;left:628px;top:62.2px;width:62px;height:47.3px;background:#007960;border-radius:7px;"></div><svg style="left:620px;top:58px" width="80" height="56" viewBox="620 58 80 56">
<path d="M636.9,73.3 V97.5 M635.1,95.7 H659.8" fill="none" stroke="#fff" stroke-width="3.6"/>
<path d="M640.1,88.5 L646.1,82.1 L649.4,86.3 L652.7,75.7 L656.3,89.9 L657.6,82.3" fill="none" stroke="#fff" stroke-width="2.2"/>
<path d="M667.3,84.5 L674.2,90.7 L681.1,84.1" fill="none" stroke="#dedede" stroke-width="3.4"/></svg><div style="position:absolute;left:697px;top:63.4px;width:68px;height:45.3px;background:#f0f0f0;border-radius:3px;box-shadow:inset 1px 2px 4px rgba(0,0,0,0.12);"></div><div style="position:absolute;left:888px;top:62.3px;width:1px;height:47.2px;background:#dcdcdc;"></div><div style="position:absolute;left:1165px;top:62.3px;width:1px;height:47.2px;background:#dcdcdc;"></div><div style="position:absolute;left:1245px;top:62.3px;width:1px;height:47.2px;background:#dcdcdc;"></div><svg style="left:722px;top:67.5px" width="19" height="20" viewBox="0 0 19 20">
<rect x="1.2" y="3.2" width="16.6" height="15.6" rx="1.5" fill="#fff" stroke="#333" stroke-width="1.8"/>
<rect x="1.2" y="3.2" width="16.6" height="3" fill="#333"/>
<path d="M1.5,10 H17.5 M1.5,14 H17.5 M5.4,6 V18.5 M9.5,6 V18.5 M13.6,6 V18.5" stroke="#5a5a8a" stroke-width="0.9"/>
<rect x="4" y="0.3" width="2.2" height="4.5" rx="1" fill="#333"/><rect x="12.8" y="0.3" width="2.2" height="4.5" rx="1" fill="#333"/></svg><div class="t " style="left:231.4px;width:1000px;text-align:center;top:91.1px;font-size:11.5px;color:#333;transform:scaleY(1.12);transform-origin:0 84.65%;transform:scaleX(1);">Calendar</div><svg style="left:781px;top:68px" width="20" height="19" viewBox="0 0 20 19">
<g fill="none" stroke="#333" stroke-width="2.2"><rect x="1.5" y="2" width="9" height="6" rx="3" transform="rotate(35 6 5)"/><rect x="9.5" y="10" width="9" height="6" rx="3" transform="rotate(35 14 13)"/></g>
<path d="M7.6,6.8 L12.4,12" stroke="#333" stroke-width="2"/></svg><div class="t " style="left:291.2px;width:1000px;text-align:center;top:91.1px;font-size:11.5px;color:#333;transform:scaleY(1.12);transform-origin:0 84.65%;transform:scaleX(1);">Chain</div><svg style="left:838px;top:71px" width="21" height="16" viewBox="0 0 21 16">
<rect x="0.5" y="0.5" width="19.5" height="3.6" fill="#333"/><rect x="0.5" y="6" width="19.5" height="3.6" fill="#333"/><rect x="0.5" y="11.5" width="19.5" height="3.6" fill="#333"/>
<rect x="11" y="1.3" width="8" height="2" fill="#ddd"/><rect x="5" y="6.8" width="14" height="2" fill="#ccc"/><rect x="9" y="12.3" width="10" height="2" fill="#ddd"/></svg><div class="t " style="left:348.2px;width:1000px;text-align:center;top:91.1px;font-size:11.5px;color:#333;transform:scaleY(1.12);transform-origin:0 84.65%;transform:scaleX(1);">Capsule</div><svg style="left:914px;top:67px" width="42" height="22" viewBox="0 0 42 22"><path d="M4,21 V4 M1,6.5 L4,1.5 L7,6.5" fill="none" stroke="#222" stroke-width="2.2"/><path d="M10,1 V18 M7,15.5 L10,20.5 L13,15.5" fill="none" stroke="#222" stroke-width="2.2"/><path d="M17,2 V19.5 H40" fill="none" stroke="#333" stroke-width="1.6"/><path d="M19.5,16 L25,10.5 L28.5,13.5 L35,7" fill="none" stroke="#222" stroke-width="2.2"/><path d="M32,4.5 H38 V10.5 Z" fill="#222"/></svg><div class="t " style="left:432.8px;width:1000px;text-align:center;top:91.1px;font-size:11.5px;color:#333;transform:scaleY(1.12);transform-origin:0 84.65%;transform:scaleX(1);">One Lane</div><svg style="left:986px;top:67px" width="42" height="22" viewBox="0 0 42 22"><path d="M4,21 V4 M1,6.5 L4,1.5 L7,6.5" fill="none" stroke="#222" stroke-width="2.2"/><path d="M10,1 V18 M7,15.5 L10,20.5 L13,15.5" fill="none" stroke="#222" stroke-width="2.2"/><path d="M17,2 V19.5 H40" fill="none" stroke="#333" stroke-width="1.6"/><path d="M19.5,16 L25,10.5 L28.5,13.5 L35,7" fill="none" stroke="#222" stroke-width="2.2"/><path d="M32,4.5 H38 V10.5 Z" fill="#222"/></svg><div class="t " style="left:505.4px;width:1000px;text-align:center;top:91.1px;font-size:11.5px;color:#333;transform:scaleY(1.12);transform-origin:0 84.65%;transform:scaleX(1);">One Y-Axis</div><svg style="left:1056px;top:67px" width="42" height="22" viewBox="0 0 42 22"><path d="M5,2 V20 M2,5 L5,1 L8,5 M2,17 L5,21 L8,17" fill="none" stroke="#222" stroke-width="2.2"/><path d="M13,2 V19.5 H36" fill="none" stroke="#333" stroke-width="1.6"/><path d="M15.5,16 L21,10.5 L24.5,13.5 L31,7" fill="none" stroke="#222" stroke-width="2.2"/><path d="M28,4.5 H34 V10.5 Z" fill="#222"/></svg><div class="t " style="left:572.1px;width:1000px;text-align:center;top:91.1px;font-size:11.5px;color:#333;transform:scaleY(1.12);transform-origin:0 84.65%;transform:scaleX(1);">Spread</div><svg style="left:1115px;top:68px" width="28" height="20" viewBox="0 0 28 20">
<path d="M1,2.5 Q1,1 2.5,1 H9 L17,9 Q18,10 17,11 L11,17 Q10,18 9,17 L1,9 Z" fill="#333"/><circle cx="5" cy="5" r="1.6" fill="#f6f6f6"/>
<path d="M20,9.5 H26 L23,12.5 Z" fill="#333"/></svg><div class="t " style="left:629.3px;width:1000px;text-align:center;top:91.1px;font-size:11.5px;color:#333;transform:scaleY(1.12);transform-origin:0 84.65%;transform:scaleX(1);">Labels</div><svg style="left:1188px;top:68px" width="30" height="20" viewBox="0 0 30 20">
<path d="M1,15 L4.5,2 L9,13 L10.5,8" fill="none" stroke="#222" stroke-width="1.8"/>
<path d="M12,10 L14,13 M15.5,15.5 L17,18 M17,11 L19.5,14" stroke="#555" stroke-width="1.4" stroke-dasharray="1.5 1.5"/>
<path d="M22,11 H28 L25,14 Z" fill="#333"/></svg><div class="t " style="left:702.5px;width:1000px;text-align:center;top:91.1px;font-size:11.5px;color:#333;transform:scaleY(1.12);transform-origin:0 84.65%;transform:scaleX(1);">Dimming</div><svg style="left:1264px;top:68px" width="19" height="19" viewBox="0 0 19 19">
<circle cx="7.5" cy="7.5" r="6.2" fill="none" stroke="#aaa" stroke-width="1.8"/><path d="M12,12 L17.5,17.5" stroke="#aaa" stroke-width="2.4"/>
<path d="M4.5,7.5 H10.5 M7.5,4.5 V10.5" stroke="#aaa" stroke-width="1.6"/></svg><div class="t " style="left:773.8px;width:1000px;text-align:center;top:91.1px;font-size:11.5px;color:#aaa;transform:scaleY(1.12);transform-origin:0 84.65%;transform:scaleX(1);">Zoom</div><svg style="left:1309px;top:67px" width="26" height="20" viewBox="0 0 26 20">
<path d="M2,9 V18 H17 V9" fill="none" stroke="#222" stroke-width="2"/><path d="M9.5,14 V3" stroke="#222" stroke-width="2.2"/><path d="M5,6 L9.5,1 L14,6 Z" fill="#222"/>
<path d="M19,10 H25 L22,13 Z" fill="#333"/></svg><div class="t " style="left:822.6px;width:1000px;text-align:center;top:91.1px;font-size:11.5px;color:#333;transform:scaleY(1.12);transform-origin:0 84.65%;transform:scaleX(1);">Export</div><svg style="left:1370px;top:68px" width="19" height="17" viewBox="0 0 19 17">
<path d="M9.5,1.5 C15,1.5 18,4 18,7 C18,10 15,12.5 9.5,12.5 C8.5,12.5 7.5,12.4 6.5,12.2 L2.5,15.5 L3.5,11 C2,10 1,8.6 1,7 C1,4 4,1.5 9.5,1.5 Z" fill="none" stroke="#aaa" stroke-width="1.5"/>
<circle cx="6" cy="7" r="1" fill="#aaa"/><circle cx="9.5" cy="7" r="1" fill="#aaa"/><circle cx="13" cy="7" r="1" fill="#aaa"/></svg><div class="t " style="left:879.3px;width:1000px;text-align:center;top:91.1px;font-size:11.5px;color:#aaa;transform:scaleY(1.12);transform-origin:0 84.65%;transform:scaleX(1);">Annotate</div><div class="t " style="right:41.7px;top:146.6px;font-size:15.3px;color:#8e1a8e;">Press–avg FFT (min)</div><svg style="left:0;top:0" width="2558" height="1266" viewBox="0 0 2558 1266"><path d="M688.5,481 V480.3 M690.5,481 V479.4 M691.5,481 V479.9 M699.5,481 V479.5 M700.5,481 V480.1 M701.5,481 V480.0 M702.5,481 V480.2 M703.5,481 V479.4 M704.5,481 V479.1 M705.5,481 V480.4 M706.5,481 V479.3 M707.5,481 V479.0 M708.5,481 V480.1 M709.5,481 V479.3 M710.5,481 V479.2 M711.5,481 V479.0 M712.5,481 V480.0 M713.5,481 V479.6 M714.5,481 V480.1 M715.5,481 V480.1 M716.5,481 V480.0 M717.5,481 V479.3 M718.5,481 V479.5 M719.5,481 V479.4 M720.5,481 V480.0 M721.5,481 V480.2 M722.5,481 V479.3 M723.5,481 V480.4 M724.5,481 V479.0 M725.5,481 V480.0 M726.5,481 V480.0 M727.5,481 V479.1 M728.5,481 V479.7 M729.5,481 V480.1 M730.5,481 V479.5 M731.5,481 V479.8 M732.5,481 V479.1 M733.5,481 V480.0 M734.5,481 V479.8 M735.5,481 V479.8 M736.5,481 V479.7 M737.5,481 V480.1 M738.5,481 V479.5 M739.5,481 V479.4 M740.5,481 V479.1 M741.5,481 V479.0 M742.5,481 V479.2 M743.5,481 V479.0 M744.5,481 V480.0 M745.5,481 V479.2 M746.5,481 V479.8 M747.5,481 V480.1 M748.5,481 V479.6 M749.5,481 V478.9 M750.5,481 V478.9 M751.5,481 V479.5 M752.5,481 V478.5 M753.5,481 V479.6 M754.5,481 V479.9 M755.5,481 V478.7 M756.5,481 V478.6 M757.5,481 V479.1 M758.5,481 V479.1 M759.5,481 V478.1 M760.5,481 V479.1 M761.5,481 V476.9 M762.5,481 V478.1 M763.5,481 V477.4 M764.5,481 V477.7 M765.5,481 V478.4 M766.5,481 V476.5 M767.5,481 V478.0 M768.5,481 V477.1 M769.5,481 V477.6 M770.5,481 V477.3 M771.5,481 V477.6 M772.5,481 V478.3 M773.5,481 V479.6 M774.5,481 V479.2 M775.5,481 V479.6 M776.5,481 V479.7 M777.5,481 V479.7 M778.5,481 V479.7 M779.5,481 V479.3 M780.5,481 V479.5 M781.5,481 V479.2 M782.5,481 V479.6 M783.5,481 V478.6 M784.5,481 V478.8 M785.5,481 V479.2 M786.5,481 V479.5 M787.5,481 V479.5 M788.5,481 V479.7 M789.5,481 V479.6 M790.5,481 V477.5 M791.5,481 V478.7 M792.5,481 V476.9 M793.5,481 V478.1 M794.5,481 V476.9 M795.5,481 V477.2 M796.5,481 V478.6 M797.5,481 V477.0 M798.5,481 V477.0 M799.5,481 V478.5 M800.5,481 V479.1 M801.5,481 V478.8 M802.5,481 V478.6 M803.5,481 V479.1 M804.5,481 V478.6 M805.5,481 V479.8 M806.5,481 V478.9 M807.5,481 V479.4 M808.5,481 V479.7 M809.5,481 V479.2 M810.5,481 V478.6 M811.5,481 V478.8 M812.5,481 V479.9 M813.5,481 V478.3 M814.5,481 V479.0 M815.5,481 V480.0 M816.5,481 V479.5 M817.5,481 V478.6 M818.5,481 V478.8 M819.5,481 V479.2 M820.5,481 V479.9 M821.5,481 V479.5 M822.5,481 V479.0 M823.5,481 V480.2 M824.5,481 V479.3 M825.5,481 V479.1 M826.5,481 V479.7 M827.5,481 V479.1 M828.5,481 V478.8 M829.5,481 V478.7 M830.5,481 V477.8 M831.5,481 V478.4 M832.5,481 V477.9 M833.5,481 V478.3 M834.5,481 V477.7 M835.5,481 V477.9 M836.5,481 V477.7 M837.5,481 V478.7 M838.5,481 V478.6 M839.5,481 V478.3 M840.5,481 V478.7 M841.5,481 V478.4 M842.5,481 V478.4 M843.5,481 V479.6 M844.5,481 V478.8 M845.5,481 V479.1 M846.5,481 V479.6 M847.5,481 V479.0 M848.5,481 V478.7 M849.5,481 V480.0 M850.5,481 V479.2 M851.5,481 V479.0 M852.5,481 V478.6 M853.5,481 V478.2 M854.5,481 V477.6 M855.5,481 V477.7 M856.5,481 V478.9 M857.5,481 V477.1 M858.5,481 V477.7 M859.5,481 V477.4 M860.5,481 V478.1 M861.5,481 V478.5 M862.5,481 V479.2 M863.5,481 V478.7 M864.5,481 V478.8 M865.5,481 V478.3 M866.5,481 V478.6 M867.5,481 V479.1 M868.5,481 V479.2 M869.5,481 V478.4 M870.5,481 V477.6 M871.5,481 V476.3 M872.5,481 V477.3 M873.5,481 V478.0 M874.5,481 V477.3 M875.5,481 V475.2 M876.5,481 V477.0 M877.5,481 V475.7 M878.5,481 V477.5 M879.5,481 V479.0 M880.5,481 V477.4 M881.5,481 V477.0 M882.5,481 V478.0 M883.5,481 V477.0 M884.5,481 V476.9 M885.5,481 V477.7 M886.5,481 V476.7 M887.5,481 V477.2 M888.5,481 V478.1 M889.5,481 V478.6 M890.5,481 V479.0 M891.5,481 V479.2 M892.5,481 V478.3 M893.5,481 V478.9 M894.5,481 V478.4 M895.5,481 V479.0 M896.5,481 V480.1 M897.5,481 V478.6 M898.5,481 V479.4 M899.5,481 V478.0 M900.5,481 V479.2 M901.5,481 V478.8 M902.5,481 V478.6 M903.5,481 V478.9 M904.5,481 V478.6 M905.5,481 V478.7 M906.5,481 V477.2 M907.5,481 V478.7 M908.5,481 V477.7 M909.5,481 V479.2 M910.5,481 V478.7 M911.5,481 V478.7 M912.5,481 V478.7 M913.5,481 V480.0 M914.5,481 V479.3 M915.5,481 V479.9 M916.5,481 V479.1 M917.5,481 V478.7 M918.5,481 V479.3 M919.5,481 V478.9 M920.5,481 V478.6 M921.5,481 V478.7 M922.5,481 V478.0 M923.5,481 V477.4 M924.5,481 V477.9 M925.5,481 V477.7 M926.5,481 V479.1 M927.5,481 V477.5 M928.5,481 V478.7 M929.5,481 V479.3 M930.5,481 V478.9 M931.5,481 V479.3 M932.5,481 V479.2 M933.5,481 V478.6 M934.5,481 V478.1 M935.5,481 V479.9 M936.5,481 V478.9 M937.5,481 V480.1 M938.5,481 V479.0 M939.5,481 V479.3 M940.5,481 V478.5 M941.5,481 V479.4 M942.5,481 V479.7 M943.5,481 V479.6 M944.5,481 V479.6 M945.5,481 V480.1 M946.5,481 V478.8 M947.5,481 V479.3 M948.5,481 V479.9 M949.5,481 V479.3 M950.5,481 V479.0 M951.5,481 V479.0 M952.5,481 V477.9 M953.5,481 V479.2 M954.5,481 V477.7 M955.5,481 V479.3 M956.5,481 V477.8 M957.5,481 V477.6 M958.5,481 V479.3 M959.5,481 V477.5 M960.5,481 V479.4 M961.5,481 V478.9 M962.5,481 V476.5 M963.5,481 V477.3 M964.5,481 V476.8 M965.5,481 V478.2 M966.5,481 V478.2 M967.5,481 V478.4 M968.5,481 V478.7 M969.5,481 V479.4 M970.5,481 V478.8 M971.5,481 V478.5 M972.5,481 V478.1 M973.5,481 V478.4 M974.5,481 V479.0 M975.5,481 V479.5 M976.5,481 V479.6 M977.5,481 V478.4 M978.5,481 V478.8 M979.5,481 V479.5 M980.5,481 V478.5 M981.5,481 V480.1 M982.5,481 V478.5 M983.5,481 V477.8 M984.5,481 V477.6 M985.5,481 V478.4 M986.5,481 V478.1 M987.5,481 V477.8 M988.5,481 V477.8 M989.5,481 V479.1 M990.5,481 V478.2 M991.5,481 V479.2 M992.5,481 V480.0 M993.5,481 V479.5 M994.5,481 V479.1 M995.5,481 V479.6 M996.5,481 V478.5 M997.5,481 V479.5 M998.5,481 V479.2 M999.5,481 V479.6 M1000.5,481 V479.7 M1001.5,481 V480.3 M1002.5,481 V479.0 M1003.5,481 V479.8 M1004.5,481 V479.5 M1005.5,481 V479.7 M1006.5,481 V480.3 M1007.5,481 V480.2 M1008.5,481 V480.0 M1009.5,481 V479.4 M1010.5,481 V479.4 M1011.5,481 V479.8 M1012.5,481 V479.2 M1013.5,481 V479.3 M1014.5,481 V478.9 M1015.5,481 V479.2 M1016.5,481 V479.6 M1017.5,481 V480.3 M1018.5,481 V479.0 M1019.5,481 V479.8 M1020.5,481 V478.9 M1021.5,481 V479.5 M1022.5,481 V478.9 M1023.5,481 V479.2 M1024.5,481 V479.6 M1025.5,481 V479.6 M1026.5,481 V479.8 M1027.5,481 V478.3 M1028.5,481 V479.6 M1029.5,481 V479.0 M1030.5,481 V478.8 M1031.5,481 V479.7 M1032.5,481 V479.4 M1033.5,481 V479.6 M1034.5,481 V478.7 M1035.5,481 V479.9 M1036.5,481 V479.3 M1037.5,481 V480.1 M1038.5,481 V479.2 M1039.5,481 V478.8 M1040.5,481 V479.4 M1041.5,481 V480.1 M1042.5,481 V480.2 M1043.5,481 V480.3 M1044.5,481 V479.3 M1045.5,481 V480.0 M1046.5,481 V480.1 M1047.5,481 V479.5 M1048.5,481 V479.6 M1049.5,481 V479.2 M1050.5,481 V480.3 M1051.5,481 V479.3 M1052.5,481 V480.2 M1053.5,481 V479.6 M1054.5,481 V479.0 M1055.5,481 V480.2 M1056.5,481 V479.4 M1057.5,481 V480.3 M1058.5,481 V479.9 M1059.5,481 V479.7 M1060.5,481 V480.2 M1061.5,481 V480.3 M1064.5,481 V480.1 M1069.5,481 V480.1 M1071.5,481 V479.5 M1074.5,481 V480.3 M1079.5,481 V480.1 M1080.5,481 V479.5 M1081.5,481 V480.1 M1082.5,481 V479.1 M1084.5,481 V479.1 M1085.5,481 V479.9 M1086.5,481 V480.4 M1091.5,481 V479.9 M1092.5,481 V479.7 M1094.5,481 V480.3 M1097.5,481 V479.4 M1098.5,481 V479.9 M1100.5,481 V479.8 M1101.5,481 V480.4 M1102.5,481 V480.3 M1103.5,481 V479.5 M1106.5,481 V480.0 M1108.5,481 V479.1 M1111.5,481 V479.4 M1112.5,481 V480.4 M1117.5,481 V479.1 M1119.5,481 V480.0 M1120.5,481 V479.6 M1124.5,481 V479.1 M1125.5,481 V479.5 M1127.5,481 V480.0 M1129.5,481 V480.1 M1135.5,481 V479.2 M1136.5,481 V479.7 M1137.5,481 V479.2 M1139.5,481 V479.7 M1140.5,481 V480.1 M1143.5,481 V479.9 M1147.5,481 V480.0 M1149.5,481 V479.9 M1152.5,481 V480.2 M1155.5,481 V479.8 M1158.5,481 V479.4 M1161.5,481 V480.3 M1162.5,481 V480.0 M1165.5,481 V480.0 M1166.5,481 V479.3 M1169.5,481 V480.2 M1171.5,481 V479.5 M1174.5,481 V479.4 M1181.5,481 V479.2 M1184.5,481 V479.1" stroke="#962c93" stroke-width="1"/><path d="M878,481 V465.5 H880 V159.5 H882 V385.5 H883 V449.5 H884 V465.5 H885 V472 H887 V481 Z" fill="#b35aae"/><path d="M880.5,481 V159.5 M882.5,481 V385.5 M883.5,481 V449.5 M878.5,481 V465.5 M884.5,481 V465.5" stroke="#8e1a8e" stroke-width="1" opacity="0.8"/></svg><svg style="left:0;top:0" width="2558" height="1266" viewBox="0 0 2558 1266"><path d="M625.5,481.2 H2535.3 M625.5,481 V492.5 M652.1,481 V492.5 M677.3,481 V492.5 M702.4,481 V492.5 M727.6,481 V492.5 M752.7,481 V492.5 M777.9,481 V492.5 M803.0,481 V492.5 M828.2,481 V492.5 M853.3,481 V492.5 M878.5,481 V492.5 M903.6,481 V492.5 M928.8,481 V492.5 M953.9,481 V492.5 M979.1,481 V492.5 M1004.2,481 V492.5 M1029.4,481 V492.5 M1054.5,481 V492.5 M1079.7,481 V492.5 M1104.8,481 V492.5 M1130.0,481 V492.5 M1155.1,481 V492.5 M1180.3,481 V492.5 M1205.4,481 V492.5 M1230.6,481 V492.5 M1255.7,481 V492.5 M1280.9,481 V492.5 M1306.1,481 V492.5 M1331.2,481 V492.5 M1356.4,481 V492.5 M1381.5,481 V492.5 M1406.7,481 V492.5 M1431.8,481 V492.5 M1457.0,481 V492.5 M1482.1,481 V492.5 M1507.3,481 V492.5 M1532.4,481 V492.5 M1557.6,481 V492.5 M1582.7,481 V492.5 M1607.9,481 V492.5 M1633.0,481 V492.5 M1658.2,481 V492.5 M1683.3,481 V492.5 M1708.5,481 V492.5 M1733.6,481 V492.5 M1758.8,481 V492.5 M1783.9,481 V492.5 M1809.1,481 V492.5 M1834.2,481 V492.5 M1859.4,481 V492.5 M1884.5,481 V492.5 M1909.7,481 V492.5 M1934.9,481 V492.5 M1960.0,481 V492.5 M1985.2,481 V492.5 M2010.3,481 V492.5 M2035.5,481 V492.5 M2060.6,481 V492.5 M2085.8,481 V492.5 M2110.9,481 V492.5 M2136.1,481 V492.5 M2161.2,481 V492.5 M2186.4,481 V492.5 M2211.5,481 V492.5 M2236.7,481 V492.5 M2261.8,481 V492.5 M2287.0,481 V492.5 M2312.1,481 V492.5 M2337.3,481 V492.5 M2362.4,481 V492.5 M2387.6,481 V492.5 M2412.7,481 V492.5 M2437.9,481 V492.5 M2463.0,481 V492.5 M2488.2,481 V492.5 M2513.3,481 V492.5" fill="none" stroke="#ccd6eb" stroke-width="1.6"/></svg><svg style="left:0;top:0" width="2558" height="1266" viewBox="0 0 2558 1266"><g font-family="Liberation Sans" font-size="15.8" fill="#8f9aa6"><text transform="translate(655.4,500.8) rotate(-45)" text-anchor="end">149....</text><text transform="translate(680.6,500.8) rotate(-45)" text-anchor="end">74.813</text><text transform="translate(705.7,500.8) rotate(-45)" text-anchor="end">50.335</text><text transform="translate(730.9,500.8) rotate(-45)" text-anchor="end">37.664</text><text transform="translate(756.0,500.8) rotate(-45)" text-anchor="end">30.257</text><text transform="translate(781.2,500.8) rotate(-45)" text-anchor="end">25.226</text><text transform="translate(806.3,500.8) rotate(-45)" text-anchor="end">21.586</text><text transform="translate(831.5,500.8) rotate(-45)" text-anchor="end">18.93</text><text transform="translate(856.6,500.8) rotate(-45)" text-anchor="end">16.856</text><text transform="translate(881.8,500.8) rotate(-45)" text-anchor="end">15.149</text><text transform="translate(906.9,500.8) rotate(-45)" text-anchor="end">13.774</text><text transform="translate(932.1,500.8) rotate(-45)" text-anchor="end">12.613</text><text transform="translate(957.2,500.8) rotate(-45)" text-anchor="end">11.645</text><text transform="translate(982.4,500.8) rotate(-45)" text-anchor="end">10.815</text><text transform="translate(1007.5,500.8) rotate(-45)" text-anchor="end">10.114</text><text transform="translate(1032.7,500.8) rotate(-45)" text-anchor="end">9.4815</text><text transform="translate(1057.8,500.8) rotate(-45)" text-anchor="end">8.9165</text><text transform="translate(1083.0,500.8) rotate(-45)" text-anchor="end">8.415</text><text transform="translate(1108.1,500.8) rotate(-45)" text-anchor="end">7.9786</text><text transform="translate(1133.3,500.8) rotate(-45)" text-anchor="end">7.5799</text><text transform="translate(1158.4,500.8) rotate(-45)" text-anchor="end">7.2192</text><text transform="translate(1183.6,500.8) rotate(-45)" text-anchor="end">6.8869</text><text transform="translate(1208.7,500.8) rotate(-45)" text-anchor="end">6.5879</text><text transform="translate(1233.9,500.8) rotate(-45)" text-anchor="end">6.3137</text><text transform="translate(1259.0,500.8) rotate(-45)" text-anchor="end">6.0681</text><text transform="translate(1284.2,500.8) rotate(-45)" text-anchor="end">5.8348</text><text transform="translate(1309.4,500.8) rotate(-45)" text-anchor="end">5.6187</text><text transform="translate(1334.5,500.8) rotate(-45)" text-anchor="end">5.4153</text><text transform="translate(1359.7,500.8) rotate(-45)" text-anchor="end">5.2287</text><text transform="translate(1384.8,500.8) rotate(-45)" text-anchor="end">5.0568</text><text transform="translate(1410.0,500.8) rotate(-45)" text-anchor="end">4.8915</text><text transform="translate(1435.1,500.8) rotate(-45)" text-anchor="end">4.7366</text><text transform="translate(1460.3,500.8) rotate(-45)" text-anchor="end">4.5932</text><text transform="translate(1485.4,500.8) rotate(-45)" text-anchor="end">4.4619</text><text transform="translate(1510.6,500.8) rotate(-45)" text-anchor="end">4.3327</text><text transform="translate(1535.7,500.8) rotate(-45)" text-anchor="end">4.214</text><text transform="translate(1560.9,500.8) rotate(-45)" text-anchor="end">4.0986</text><text transform="translate(1586.0,500.8) rotate(-45)" text-anchor="end">3.9907</text><text transform="translate(1611.2,500.8) rotate(-45)" text-anchor="end">3.8885</text><text transform="translate(1636.3,500.8) rotate(-45)" text-anchor="end">3.79</text><text transform="translate(1661.5,500.8) rotate(-45)" text-anchor="end">3.6976</text><text transform="translate(1686.6,500.8) rotate(-45)" text-anchor="end">3.6096</text><text transform="translate(1711.8,500.8) rotate(-45)" text-anchor="end">3.5257</text><text transform="translate(1736.9,500.8) rotate(-45)" text-anchor="end">3.4456</text><text transform="translate(1762.1,500.8) rotate(-45)" text-anchor="end">3.3712</text><text transform="translate(1787.2,500.8) rotate(-45)" text-anchor="end">3.2969</text><text transform="translate(1812.4,500.8) rotate(-45)" text-anchor="end">3.2258</text><text transform="translate(1837.5,500.8) rotate(-45)" text-anchor="end">3.1587</text><text transform="translate(1862.7,500.8) rotate(-45)" text-anchor="end">3.0942</text><text transform="translate(1887.8,500.8) rotate(-45)" text-anchor="end">3.0332</text><text transform="translate(1913.0,500.8) rotate(-45)" text-anchor="end">2.973</text><text transform="translate(1938.2,500.8) rotate(-45)" text-anchor="end">2.9158</text><text transform="translate(1963.3,500.8) rotate(-45)" text-anchor="end">2.8623</text><text transform="translate(1988.5,500.8) rotate(-45)" text-anchor="end">2.8093</text><text transform="translate(2013.6,500.8) rotate(-45)" text-anchor="end">2.7582</text><text transform="translate(2038.8,500.8) rotate(-45)" text-anchor="end">2.709</text><text transform="translate(2063.9,500.8) rotate(-45)" text-anchor="end">2.6615</text><text transform="translate(2089.1,500.8) rotate(-45)" text-anchor="end">2.615</text><text transform="translate(2114.2,500.8) rotate(-45)" text-anchor="end">2.57</text><text transform="translate(2139.4,500.8) rotate(-45)" text-anchor="end">2.5272</text><text transform="translate(2164.5,500.8) rotate(-45)" text-anchor="end">2.4858</text><text transform="translate(2189.7,500.8) rotate(-45)" text-anchor="end">2.4463</text><text transform="translate(2214.8,500.8) rotate(-45)" text-anchor="end">2.4075</text><text transform="translate(2240.0,500.8) rotate(-45)" text-anchor="end">2.3704</text><text transform="translate(2265.1,500.8) rotate(-45)" text-anchor="end">2.3339</text><text transform="translate(2290.3,500.8) rotate(-45)" text-anchor="end">2.2981</text><text transform="translate(2315.4,500.8) rotate(-45)" text-anchor="end">2.2638</text><text transform="translate(2340.6,500.8) rotate(-45)" text-anchor="end">2.2305</text><text transform="translate(2365.7,500.8) rotate(-45)" text-anchor="end">2.1977</text><text transform="translate(2390.9,500.8) rotate(-45)" text-anchor="end">2.1668</text><text transform="translate(2416.0,500.8) rotate(-45)" text-anchor="end">2.1358</text><text transform="translate(2441.2,500.8) rotate(-45)" text-anchor="end">2.1062</text><text transform="translate(2466.3,500.8) rotate(-45)" text-anchor="end">2.0773</text><text transform="translate(2491.5,500.8) rotate(-45)" text-anchor="end">2.0501</text><text transform="translate(2516.6,500.8) rotate(-45)" text-anchor="end">2.022</text></g></svg><div style="position:absolute;left:650px;top:555.5px;width:1892px;height:394px;background:#f9f9f9;"></div><div style="position:absolute;left:649px;top:555.5px;width:2px;height:394px;background:#3f51a3;"></div><div style="position:absolute;left:650px;top:948.8px;width:1892px;height:2px;background:#e1e6f2;"></div><div class="t " style="right:36.2px;top:561.1px;font-size:15.4px;color:#4a5a9a;">Press_hpf (psi)</div><div class="t " style="right:1914.5px;top:577.8px;font-size:13.9px;color:#4d5583;">1.5</div><div class="t " style="right:1914.5px;top:637.3px;font-size:13.9px;color:#4d5583;">1.0</div><div class="t " style="right:1914.5px;top:694.8px;font-size:13.9px;color:#4d5583;">0.5</div><div class="t " style="right:1914.5px;top:753.0px;font-size:13.9px;color:#4d5583;">0.0</div><div class="t " style="right:1914.5px;top:811.7px;font-size:13.9px;color:#4d5583;">-0.5</div><div class="t " style="right:1914.5px;top:870.3px;font-size:13.9px;color:#4d5583;">-1.0</div><div class="t " style="right:1914.5px;top:928.6px;font-size:13.9px;color:#4d5583;">-1.5</div><svg style="left:0;top:0" width="2558" height="1266" viewBox="0 0 2558 1266"><path d="M650.5,666.1 L651.9,858.8 L653.3,658.5 L654.7,855.7 L656.1,666.5 L657.4,857.2 L658.8,660.3 L660.2,861.2 L661.6,666.1 L663.0,853.0 L664.4,659.5 L665.8,859.1 L667.2,656.7 L668.6,860.8 L670.0,662.3 L671.3,856.5 L672.7,653.1 L674.1,856.5 L675.5,662.4 L676.9,859.6 L678.3,663.5 L679.7,865.7 L681.1,664.6 L682.5,858.2 L683.9,662.4 L685.2,859.7 L686.6,660.0 L688.0,857.3 L689.4,658.7 L690.8,868.0 L692.2,655.6 L693.6,854.8 L695.0,659.3 L696.4,843.3 L697.8,677.3 L699.1,868.2 L700.5,661.3 L701.9,888.4 L703.3,661.1 L704.7,895.4 L706.1,661.3 L707.5,861.3 L708.9,638.8 L710.3,873.5 L711.7,626.0 L713.0,859.9 L714.4,652.1 L715.8,854.0 L717.2,659.2 L718.6,867.5 L720.0,627.7 L721.4,891.0 L722.8,637.9 L724.2,861.7 L725.6,660.5 L726.9,826.8 L728.3,658.3 L729.7,880.0 L731.1,659.7 L732.5,859.9 L733.9,663.4 L735.3,856.5 L736.7,647.5 L738.1,857.3 L739.5,638.0 L740.8,857.5 L742.2,663.7 L743.6,851.6 L745.0,659.5 L746.4,870.0 L747.8,664.3 L749.2,885.4 L750.6,642.1 L752.0,861.3 L753.4,675.9 L754.7,859.1 L756.1,647.6 L757.5,853.7 L758.9,662.2 L760.3,862.4 L761.7,662.4 L763.1,863.0 L764.5,659.3 L765.9,851.5 L767.3,659.3 L768.6,860.5 L770.0,662.3 L771.4,859.5 L772.8,664.5 L774.2,858.3 L775.6,661.1 L777.0,860.9 L778.4,664.7 L779.8,854.6 L781.2,664.5 L782.5,863.5 L783.9,658.2 L785.3,857.0 L786.7,661.2 L788.1,857.9 L789.5,661.2 L790.9,856.8 L792.3,663.1 L793.7,853.2 L795.1,664.1 L796.4,863.1 L797.8,660.1 L799.2,857.7 L800.6,662.7 L802.0,857.7 L803.4,660.7 L804.8,855.3 L806.2,661.3 L807.6,858.3 L809.0,664.5 L810.3,854.8 L811.7,665.4 L813.1,853.8 L814.5,658.9 L815.9,849.4 L817.3,662.8 L818.7,855.4 L820.1,664.1 L821.5,857.8 L822.9,658.1 L824.2,857.7 L825.6,662.4 L827.0,855.4 L828.4,662.4 L829.8,860.6 L831.2,663.3 L832.6,853.5 L834.0,666.3 L835.4,853.7 L836.8,666.7 L838.1,861.2 L839.5,660.7 L840.9,856.7 L842.3,656.9 L843.7,855.2 L845.1,659.4 L846.5,860.2 L847.9,667.2 L849.3,852.1 L850.7,665.1 L852.0,860.6 L853.4,657.5 L854.8,853.3 L856.2,658.3 L857.6,856.2 L859.0,663.3 L860.4,855.6 L861.8,663.0 L863.2,851.2 L864.6,665.4 L865.9,853.2 L867.3,660.3 L868.7,864.6 L870.1,652.6 L871.5,856.3 L872.9,667.8 L874.3,856.1 L875.7,665.1 L877.1,864.3 L878.5,660.0 L879.8,855.0 L881.2,658.7 L882.6,859.3 L884.0,667.5 L885.4,855.6 L886.8,662.8 L888.2,857.5 L889.6,661.5 L891.0,856.3 L892.4,661.3 L893.7,855.5 L895.1,665.0 L896.5,862.7 L897.9,660.7 L899.3,859.0 L900.7,667.4 L902.1,856.9 L903.5,659.1 L904.9,853.0 L906.3,658.2 L907.6,856.1 L909.0,660.6 L910.4,857.0 L911.8,661.2 L913.2,861.6 L914.6,663.3 L916.0,862.8 L917.4,664.6 L918.8,854.3 L920.2,659.5 L921.5,853.8 L922.9,663.2 L924.3,860.6 L925.7,657.0 L927.1,851.4 L928.5,662.2 L929.9,856.5 L931.3,651.9 L932.7,860.5 L934.1,658.8 L935.4,856.3 L936.8,657.4 L938.2,861.3 L939.6,655.1 L941.0,847.6 L942.4,646.5 L943.8,863.8 L945.2,679.8 L946.6,859.6 L948.0,656.7 L949.3,859.5 L950.7,647.0 L952.1,862.1 L953.5,660.4 L954.9,855.5 L956.3,628.5 L957.7,839.4 L959.1,631.4 L960.5,884.7 L961.9,684.5 L963.2,859.9 L964.6,629.5 L966.0,884.8 L967.4,660.8 L968.8,878.6 L970.2,657.6 L971.6,856.7 L973.0,613.8 L974.4,892.6 L975.8,646.5 L977.1,861.1 L978.5,645.0 L979.9,851.2 L981.3,661.0 L982.7,859.4 L984.1,646.9 L985.5,873.7 L986.9,606.4 L988.3,856.8 L989.7,660.6 L991.0,854.3 L992.4,682.6 L993.8,854.1 L995.2,656.5 L996.6,861.3 L998.0,639.6 L999.4,918.2 L1000.8,665.3 L1002.2,883.1 L1003.6,661.0 L1004.9,870.3 L1006.3,659.8 L1007.7,911.1 L1009.1,631.2 L1010.5,880.1 L1011.9,679.7 L1013.3,877.3 L1014.7,662.8 L1016.1,882.6 L1017.5,663.8 L1018.8,891.2 L1020.2,661.3 L1021.6,890.5 L1023.0,672.4 L1024.4,854.6 L1025.8,681.4 L1027.2,859.1 L1028.6,671.2 L1030.0,881.1 L1031.4,647.2 L1032.7,871.1 L1034.1,645.9 L1035.5,879.3 L1036.9,673.6 L1038.3,857.1 L1039.7,649.2 L1041.1,871.4 L1042.5,647.1 L1043.9,859.9 L1045.3,684.4 L1046.6,864.0 L1048.0,662.4 L1049.4,868.0 L1050.8,659.7 L1052.2,860.0 L1053.6,661.2 L1055.0,850.9 L1056.4,659.8 L1057.8,855.1 L1059.2,664.4 L1060.5,849.0 L1061.9,661.6 L1063.3,859.0 L1064.7,675.5 L1066.1,855.9 L1067.5,659.8 L1068.9,858.6 L1070.3,662.7 L1071.7,856.3 L1073.1,663.8 L1074.5,862.7 L1075.8,662.9 L1077.2,854.8 L1078.6,659.9 L1080.0,860.0 L1081.4,662.4 L1082.8,854.2 L1084.2,658.0 L1085.6,861.1 L1087.0,668.9 L1088.4,854.2 L1089.7,654.9 L1091.1,854.7 L1092.5,667.6 L1093.9,859.8 L1095.3,662.9 L1096.7,860.3 L1098.1,668.4 L1099.5,862.2 L1100.9,659.9 L1102.3,855.9 L1103.6,664.0 L1105.0,860.0 L1106.4,664.2 L1107.8,860.1 L1109.2,663.6 L1110.6,858.9 L1112.0,667.6 L1113.4,855.1 L1114.8,668.2 L1116.2,855.8 L1117.5,663.9 L1118.9,856.6 L1120.3,661.5 L1121.7,850.4 L1123.1,662.1 L1124.5,858.2 L1125.9,666.2 L1127.3,857.0 L1128.7,670.1 L1130.1,853.8 L1131.4,665.5 L1132.8,852.4 L1134.2,658.0 L1135.6,859.2 L1137.0,661.6 L1138.4,856.1 L1139.8,657.1 L1141.2,860.2 L1142.6,660.8 L1144.0,856.6 L1145.3,663.2 L1146.7,856.0 L1148.1,662.1 L1149.5,852.5 L1150.9,661.9 L1152.3,859.9 L1153.7,661.5 L1155.1,853.3 L1156.5,661.6 L1157.9,854.1 L1159.2,666.6 L1160.6,865.1 L1162.0,663.8 L1163.4,853.9 L1164.8,667.3 L1166.2,856.2 L1167.6,663.9 L1169.0,850.1 L1170.4,667.4 L1171.8,860.9 L1173.1,665.3 L1174.5,851.7 L1175.9,659.7 L1177.3,851.4 L1178.7,655.3 L1180.1,851.9 L1181.5,664.6 L1182.9,854.3 L1184.3,663.5 L1185.7,851.5 L1187.0,665.1 L1188.4,859.2 L1189.8,658.5 L1191.2,861.9 L1192.6,660.2 L1194.0,837.2 L1195.4,687.1 L1196.8,864.4 L1198.2,660.2 L1199.6,858.5 L1200.9,661.6 L1202.3,854.3 L1203.7,650.5 L1205.1,857.3 L1206.5,648.2 L1207.9,852.5 L1209.3,661.7 L1210.7,868.0 L1212.1,664.7 L1213.5,857.3 L1214.8,665.2 L1216.2,860.4 L1217.6,637.0 L1219.0,876.2 L1220.4,656.7 L1221.8,848.1 L1223.2,652.4 L1224.6,835.6 L1226.0,642.1 L1227.4,885.2 L1228.7,640.2 L1230.1,878.1 L1231.5,663.9 L1232.9,858.5 L1234.3,663.3 L1235.7,840.7 L1237.1,670.6 L1238.5,871.3 L1239.9,647.3 L1241.3,897.2 L1242.6,652.6 L1244.0,874.8 L1245.4,636.9 L1246.8,865.9 L1248.2,662.3 L1249.6,854.4 L1251.0,659.1 L1252.4,856.1 L1253.8,660.5 L1255.2,867.2 L1256.5,659.5 L1257.9,858.9 L1259.3,666.9 L1260.7,867.7 L1262.1,634.5 L1263.5,857.8 L1264.9,654.0 L1266.3,878.4 L1267.7,627.7 L1269.1,859.5 L1270.4,658.8 L1271.8,879.2 L1273.2,658.5 L1274.6,861.7 L1276.0,654.5 L1277.4,871.5 L1278.8,632.2 L1280.2,868.6 L1281.6,623.7 L1283.0,880.5 L1284.3,664.4 L1285.7,856.5 L1287.1,629.4 L1288.5,877.0 L1289.9,659.8 L1291.3,858.7 L1292.7,653.9 L1294.1,856.8 L1295.5,688.9 L1296.9,862.5 L1298.2,655.6 L1299.6,870.6 L1301.0,652.5 L1302.4,879.4 L1303.8,655.7 L1305.2,855.2 L1306.6,661.9 L1308.0,853.5 L1309.4,666.0 L1310.8,862.6 L1312.1,653.8 L1313.5,855.8 L1314.9,663.8 L1316.3,854.4 L1317.7,665.7 L1319.1,858.8 L1320.5,661.7 L1321.9,860.4 L1323.3,663.9 L1324.7,859.0 L1326.0,655.1 L1327.4,860.6 L1328.8,657.0 L1330.2,856.4 L1331.6,659.5 L1333.0,854.8 L1334.4,661.1 L1335.8,855.2 L1337.2,662.0 L1338.6,853.0 L1339.9,660.7 L1341.3,856.6 L1342.7,661.5 L1344.1,855.8 L1345.5,670.1 L1346.9,855.5 L1348.3,659.4 L1349.7,857.5 L1351.1,662.9 L1352.5,860.4 L1353.8,655.2 L1355.2,860.3 L1356.6,660.6 L1358.0,854.3 L1359.4,664.8 L1360.8,861.0 L1362.2,661.1 L1363.6,857.7 L1365.0,659.6 L1366.4,855.7 L1367.7,669.9 L1369.1,857.5 L1370.5,658.1 L1371.9,856.9 L1373.3,661.2 L1374.7,860.2 L1376.1,655.5 L1377.5,854.1 L1378.9,659.7 L1380.3,863.6 L1381.6,664.3 L1383.0,860.5 L1384.4,658.6 L1385.8,863.7 L1387.2,659.6 L1388.6,857.4 L1390.0,663.4 L1391.4,855.8 L1392.8,661.1 L1394.2,856.7 L1395.5,657.6 L1396.9,860.9 L1398.3,664.8 L1399.7,864.2 L1401.1,658.2 L1402.5,853.5 L1403.9,658.4 L1405.3,861.4 L1406.7,658.5 L1408.1,856.1 L1409.4,659.8 L1410.8,858.6 L1412.2,663.8 L1413.6,862.5 L1415.0,661.2 L1416.4,859.5 L1417.8,661.5 L1419.2,862.5 L1420.6,661.1 L1422.0,854.3 L1423.3,665.7 L1424.7,851.4 L1426.1,664.0 L1427.5,856.1 L1428.9,664.4 L1430.3,864.9 L1431.7,663.3 L1433.1,855.1 L1434.5,662.9 L1435.9,856.3 L1437.2,658.3 L1438.6,857.1 L1440.0,666.1 L1441.4,856.7 L1442.8,657.5 L1444.2,858.8 L1445.6,662.5 L1447.0,860.0 L1448.4,661.5 L1449.8,856.1 L1451.1,663.2 L1452.5,863.1 L1453.9,661.9 L1455.3,860.2 L1456.7,664.0 L1458.1,856.8 L1459.5,653.8 L1460.9,851.3 L1462.3,658.2 L1463.7,858.3 L1465.0,661.9 L1466.4,854.1 L1467.8,658.3 L1469.2,855.7 L1470.6,660.1 L1472.0,861.4 L1473.4,663.9 L1474.8,854.9 L1476.2,665.2 L1477.6,852.5 L1478.9,666.0 L1480.3,857.0 L1481.7,667.3 L1483.1,860.3 L1484.5,661.6 L1485.9,843.1 L1487.3,660.9 L1488.7,875.2 L1490.1,666.1 L1491.5,865.3 L1492.8,642.8 L1494.2,888.3 L1495.6,690.6 L1497.0,856.3 L1498.4,656.3 L1499.8,863.8 L1501.2,656.6 L1502.6,855.6 L1504.0,647.2 L1505.4,910.4 L1506.7,658.1 L1508.1,880.6 L1509.5,607.1 L1510.9,876.1 L1512.3,662.2 L1513.7,860.9 L1515.1,628.6 L1516.5,882.3 L1517.9,584.4 L1519.3,857.3 L1520.6,646.1 L1522.0,860.3 L1523.4,643.3 L1524.8,853.6 L1526.2,652.0 L1527.6,863.4 L1529.0,642.3 L1530.4,947.1 L1531.8,639.2 L1533.2,907.0 L1534.5,653.8 L1535.9,886.5 L1537.3,632.9 L1538.7,938.9 L1540.1,665.6 L1541.5,882.9 L1542.9,663.0 L1544.3,858.4 L1545.7,657.3 L1547.1,904.4 L1548.4,618.6 L1549.8,914.3 L1551.2,686.5 L1552.6,918.6 L1554.0,686.3 L1555.4,870.8 L1556.8,621.7 L1558.2,857.7 L1559.6,675.7 L1561.0,862.3 L1562.3,656.9 L1563.7,877.7 L1565.1,629.6 L1566.5,865.1 L1567.9,625.0 L1569.3,862.7 L1570.7,632.4 L1572.1,860.5 L1573.5,646.4 L1574.9,874.0 L1576.2,638.3 L1577.6,867.3 L1579.0,658.8 L1580.4,884.5 L1581.8,621.0 L1583.2,880.0 L1584.6,637.1 L1586.0,865.9 L1587.4,663.0 L1588.8,836.1 L1590.1,642.2 L1591.5,859.7 L1592.9,661.2 L1594.3,866.6 L1595.7,661.7 L1597.1,864.7 L1598.5,656.6 L1599.9,849.6 L1601.3,663.1 L1602.7,852.3 L1604.0,665.4 L1605.4,849.3 L1606.8,661.0 L1608.2,855.7 L1609.6,664.8 L1611.0,854.7 L1612.4,665.0 L1613.8,856.2 L1615.2,663.2 L1616.6,863.0 L1617.9,664.4 L1619.3,856.9 L1620.7,661.9 L1622.1,860.5 L1623.5,660.1 L1624.9,861.2 L1626.3,661.1 L1627.7,858.3 L1629.1,660.5 L1630.5,858.1 L1631.8,662.4 L1633.2,855.9 L1634.6,667.5 L1636.0,859.2 L1637.4,664.0 L1638.8,857.7 L1640.2,657.3 L1641.6,852.3 L1643.0,659.5 L1644.4,858.3 L1645.7,668.0 L1647.1,857.2 L1648.5,666.2 L1649.9,860.9 L1651.3,662.0 L1652.7,862.9 L1654.1,663.4 L1655.5,860.2 L1656.9,661.6 L1658.3,850.9 L1659.6,659.8 L1661.0,853.6 L1662.4,666.6 L1663.8,860.0 L1665.2,666.6 L1666.6,853.0 L1668.0,661.4 L1669.4,855.8 L1670.8,665.6 L1672.2,861.0 L1673.5,661.7 L1674.9,859.6 L1676.3,657.4 L1677.7,857.9 L1679.1,653.5 L1680.5,854.2 L1681.9,658.5 L1683.3,861.4 L1684.7,666.2 L1686.1,859.8 L1687.4,668.3 L1688.8,862.3 L1690.2,660.9 L1691.6,857.4 L1693.0,662.3 L1694.4,855.8 L1695.8,659.2 L1697.2,858.2 L1698.6,663.2 L1700.0,846.7 L1701.3,659.7 L1702.7,859.6 L1704.1,657.7 L1705.5,858.2 L1706.9,665.2 L1708.3,857.8 L1709.7,664.2 L1711.1,863.2 L1712.5,660.5 L1713.9,855.1 L1715.2,665.6 L1716.6,860.5 L1718.0,661.0 L1719.4,847.9 L1720.8,666.0 L1722.2,860.8 L1723.6,667.8 L1725.0,855.7 L1726.4,660.7 L1727.8,859.2 L1729.1,655.7 L1730.5,862.7 L1731.9,658.5 L1733.3,862.0 L1734.7,660.6 L1736.1,860.1 L1737.5,654.9 L1738.9,865.0 L1740.3,659.6 L1741.7,869.3 L1743.0,652.7 L1744.4,861.8 L1745.8,655.6 L1747.2,854.9 L1748.6,660.0 L1750.0,865.1 L1751.4,661.8 L1752.8,882.6 L1754.2,657.8 L1755.6,857.8 L1756.9,659.8 L1758.3,885.0 L1759.7,633.3 L1761.1,879.5 L1762.5,638.2 L1763.9,860.8 L1765.3,626.5 L1766.7,857.1 L1768.1,634.1 L1769.5,890.3 L1770.8,649.1 L1772.2,859.0 L1773.6,643.4 L1775.0,849.6 L1776.4,614.2 L1777.8,912.0 L1779.2,684.1 L1780.6,860.9 L1782.0,609.7 L1783.4,889.6 L1784.7,636.2 L1786.1,860.9 L1787.5,661.4 L1788.9,854.5 L1790.3,650.5 L1791.7,888.1 L1793.1,634.7 L1794.5,884.4 L1795.9,647.3 L1797.3,853.0 L1798.6,664.1 L1800.0,857.2 L1801.4,664.4 L1802.8,857.6 L1804.2,668.9 L1805.6,844.3 L1807.0,687.6 L1808.4,860.5 L1809.8,659.2 L1811.2,855.4 L1812.5,661.4 L1813.9,866.9 L1815.3,619.8 L1816.7,833.0 L1818.1,625.0 L1819.5,908.1 L1820.9,660.6 L1822.3,888.7 L1823.7,652.7 L1825.1,865.8 L1826.4,663.3 L1827.8,854.3 L1829.2,660.8 L1830.6,863.1 L1832.0,656.7 L1833.4,867.9 L1834.8,633.9 L1836.2,872.5 L1837.6,651.6 L1839.0,870.7 L1840.3,642.3 L1841.7,864.2 L1843.1,658.8 L1844.5,856.7 L1845.9,646.5 L1847.3,869.5 L1848.7,662.0 L1850.1,836.6 L1851.5,665.4 L1852.9,863.3 L1854.2,658.6 L1855.6,856.6 L1857.0,679.3 L1858.4,864.1 L1859.8,664.8 L1861.2,858.1 L1862.6,652.7 L1864.0,855.7 L1865.4,658.5 L1866.8,857.3 L1868.1,659.6 L1869.5,853.1 L1870.9,665.5 L1872.3,846.1 L1873.7,658.5 L1875.1,859.0 L1876.5,666.0 L1877.9,860.4 L1879.3,659.9 L1880.7,867.6 L1882.0,661.1 L1883.4,860.6 L1884.8,659.8 L1886.2,860.1 L1887.6,662.0 L1889.0,856.0 L1890.4,659.5 L1891.8,861.8 L1893.2,666.0 L1894.6,853.5 L1895.9,662.1 L1897.3,863.7 L1898.7,662.6 L1900.1,851.6 L1901.5,659.1 L1902.9,860.1 L1904.3,655.2 L1905.7,858.1 L1907.1,655.1 L1908.5,855.0 L1909.8,658.8 L1911.2,857.9 L1912.6,666.1 L1914.0,856.5 L1915.4,657.3 L1916.8,861.4 L1918.2,663.2 L1919.6,861.3 L1921.0,658.8 L1922.4,860.6 L1923.7,660.9 L1925.1,858.5 L1926.5,664.8 L1927.9,857.2 L1929.3,661.5 L1930.7,854.9 L1932.1,662.9 L1933.5,858.1 L1934.9,661.2 L1936.3,861.1 L1937.6,665.5 L1939.0,856.1 L1940.4,661.0 L1941.8,856.2 L1943.2,660.8 L1944.6,855.9 L1946.0,657.8 L1947.4,856.7 L1948.8,665.9 L1950.2,860.1 L1951.5,656.2 L1952.9,850.8 L1954.3,662.4 L1955.7,857.7 L1957.1,658.3 L1958.5,862.7 L1959.9,662.5 L1961.3,852.1 L1962.7,659.6 L1964.1,861.0 L1965.4,660.3 L1966.8,857.8 L1968.2,664.7 L1969.6,865.9 L1971.0,666.1 L1972.4,852.3 L1973.8,658.5 L1975.2,858.5 L1976.6,659.6 L1978.0,858.7 L1979.3,656.1 L1980.7,862.4 L1982.1,663.8 L1983.5,861.0 L1984.9,666.0 L1986.3,851.6 L1987.7,657.7 L1989.1,856.0 L1990.5,669.3 L1991.9,857.4 L1993.2,664.2 L1994.6,859.2 L1996.0,662.1 L1997.4,854.8 L1998.8,664.4 L2000.2,860.1 L2001.6,665.1 L2003.0,857.9 L2004.4,665.3 L2005.8,859.1 L2007.1,655.7 L2008.5,859.5 L2009.9,658.1 L2011.3,860.0 L2012.7,660.3 L2014.1,860.4 L2015.5,658.1 L2016.9,839.3 L2018.3,653.7 L2019.7,868.1 L2021.0,654.0 L2022.4,829.3 L2023.8,662.0 L2025.2,860.2 L2026.6,627.4 L2028.0,862.5 L2029.4,664.5 L2030.8,894.7 L2032.2,614.6 L2033.6,859.2 L2034.9,656.6 L2036.3,855.2 L2037.7,675.9 L2039.1,889.3 L2040.5,660.8 L2041.9,902.3 L2043.3,660.4 L2044.7,862.1 L2046.1,659.8 L2047.5,839.9 L2048.8,608.3 L2050.2,856.8 L2051.6,665.0 L2053.0,905.2 L2054.4,614.7 L2055.8,899.8 L2057.2,641.1 L2058.6,894.0 L2060.0,665.4 L2061.4,891.0 L2062.7,682.6 L2064.1,857.1 L2065.5,662.0 L2066.9,858.7 L2068.3,665.2 L2069.7,885.5 L2071.1,644.4 L2072.5,850.2 L2073.9,659.2 L2075.3,855.7 L2076.6,686.0 L2078.0,895.1 L2079.4,594.0 L2080.8,861.5 L2082.2,675.3 L2083.6,839.1 L2085.0,644.1 L2086.4,862.7 L2087.8,652.6 L2089.2,909.4 L2090.5,658.3 L2091.9,901.6 L2093.3,666.8 L2094.7,857.6 L2096.1,677.8 L2097.5,888.0 L2098.9,646.6 L2100.3,895.9 L2101.7,663.4 L2103.1,880.4 L2104.4,625.7 L2105.8,883.0 L2107.2,633.3 L2108.6,857.8 L2110.0,651.3 L2111.4,861.9 L2112.8,654.0 L2114.2,865.8 L2115.6,648.7 L2117.0,859.9 L2118.3,662.9 L2119.7,860.4 L2121.1,655.9 L2122.5,854.4 L2123.9,661.3 L2125.3,857.2 L2126.7,666.5 L2128.1,857.8 L2129.5,663.8 L2130.9,853.1 L2132.2,668.0 L2133.6,852.3 L2135.0,658.4 L2136.4,859.6 L2137.8,661.1 L2139.2,857.2 L2140.6,656.7 L2142.0,861.9 L2143.4,661.2 L2144.8,857.3 L2146.1,655.6 L2147.5,858.8 L2148.9,663.5 L2150.3,853.6 L2151.7,667.0 L2153.1,854.7 L2154.5,661.9 L2155.9,857.3 L2157.3,656.4 L2158.7,860.0 L2160.0,655.5 L2161.4,856.5 L2162.8,664.5 L2164.2,859.2 L2165.6,662.3 L2167.0,858.0 L2168.4,661.6 L2169.8,854.8 L2171.2,665.5 L2172.6,855.3 L2173.9,664.6 L2175.3,861.9 L2176.7,664.3 L2178.1,858.2 L2179.5,660.4 L2180.9,856.0 L2182.3,660.4 L2183.7,859.6 L2185.1,667.9 L2186.5,858.3 L2187.8,663.2 L2189.2,859.7 L2190.6,663.4 L2192.0,855.3 L2193.4,664.5 L2194.8,857.1 L2196.2,660.4 L2197.6,855.9 L2199.0,661.6 L2200.4,860.3 L2201.7,664.6 L2203.1,862.3 L2204.5,664.7 L2205.9,852.1 L2207.3,663.3 L2208.7,857.1 L2210.1,661.7 L2211.5,854.9 L2212.9,661.2 L2214.3,860.9 L2215.6,658.6 L2217.0,857.3 L2218.4,666.6 L2219.8,863.4 L2221.2,658.6 L2222.6,857.3 L2224.0,658.0 L2225.4,862.0 L2226.8,661.3 L2228.2,854.4 L2229.5,661.1 L2230.9,854.2 L2232.3,663.0 L2233.7,861.9 L2235.1,662.1 L2236.5,853.6 L2237.9,661.7 L2239.3,856.9 L2240.7,665.3 L2242.1,857.5 L2243.4,655.0 L2244.8,860.5 L2246.2,660.5 L2247.6,859.3 L2249.0,655.7 L2250.4,851.4 L2251.8,659.1 L2253.2,856.2 L2254.6,660.2 L2256.0,856.7 L2257.3,663.8 L2258.7,849.4 L2260.1,661.3 L2261.5,859.2 L2262.9,665.0 L2264.3,851.1 L2265.7,663.2 L2267.1,849.2 L2268.5,665.1 L2269.9,858.4 L2271.2,659.9 L2272.6,859.3 L2274.0,660.7 L2275.4,857.0 L2276.8,660.4 L2278.2,860.6 L2279.6,661.5 L2281.0,865.3 L2282.4,657.3 L2283.8,858.7 L2285.1,655.9 L2286.5,871.6 L2287.9,640.7 L2289.3,859.6 L2290.7,634.3 L2292.1,854.8 L2293.5,690.0 L2294.9,884.5 L2296.3,663.0 L2297.7,865.7 L2299.0,648.2 L2300.4,881.4 L2301.8,663.2 L2303.2,881.6 L2304.6,671.2 L2306.0,858.2 L2307.4,685.5 L2308.8,845.3 L2310.2,654.6 L2311.6,864.4 L2312.9,665.7 L2314.3,856.0 L2315.7,629.3 L2317.1,860.4 L2318.5,601.2 L2319.9,881.4 L2321.3,601.6 L2322.7,853.1 L2324.1,597.8 L2325.5,886.1 L2326.8,644.9 L2328.2,874.2 L2329.6,658.8 L2331.0,852.1 L2332.4,672.7 L2333.8,864.2 L2335.2,641.3 L2336.6,857.1 L2338.0,652.9 L2339.4,848.2 L2340.7,608.6 L2342.1,855.3 L2343.5,671.2 L2344.9,856.2 L2346.3,658.8 L2347.7,878.3 L2349.1,600.6 L2350.5,905.8 L2351.9,642.6 L2353.3,861.6 L2354.6,665.1 L2356.0,853.3 L2357.4,586.9 L2358.8,865.6 L2360.2,661.7 L2361.6,861.6 L2363.0,657.9 L2364.4,870.6 L2365.8,642.7 L2367.2,928.8 L2368.5,652.9 L2369.9,923.7 L2371.3,659.3 L2372.7,899.4 L2374.1,624.1 L2375.5,854.7 L2376.9,654.2 L2378.3,874.7 L2379.7,618.7 L2381.1,890.7 L2382.4,643.0 L2383.8,858.4 L2385.2,626.3 L2386.6,861.6 L2388.0,665.9 L2389.4,889.4 L2390.8,690.5 L2392.2,857.0 L2393.6,656.6 L2395.0,859.0 L2396.3,628.9 L2397.7,865.5 L2399.1,650.1 L2400.5,891.1 L2401.9,662.2 L2403.3,872.6 L2404.7,657.2 L2406.1,873.9 L2407.5,665.7 L2408.9,873.1 L2410.2,647.5 L2411.6,845.1 L2413.0,657.2 L2414.4,845.6 L2415.8,668.6 L2417.2,855.6 L2418.6,661.7 L2420.0,854.8 L2421.4,663.8 L2422.8,855.9 L2424.1,670.7 L2425.5,864.0 L2426.9,659.4 L2428.3,864.6 L2429.7,657.7 L2431.1,859.1 L2432.5,659.1 L2433.9,851.6 L2435.3,665.5 L2436.7,860.4 L2438.0,663.3 L2439.4,851.8 L2440.8,662.0 L2442.2,853.0 L2443.6,662.0 L2445.0,862.8 L2446.4,665.9 L2447.8,855.9 L2449.2,660.1 L2450.6,857.3 L2451.9,661.4 L2453.3,854.5 L2454.7,663.2 L2456.1,849.2 L2457.5,662.6 L2458.9,861.8 L2460.3,665.9 L2461.7,856.8 L2463.1,659.5 L2464.5,861.6 L2465.8,658.0 L2467.2,854.3 L2468.6,663.4 L2470.0,863.5 L2471.4,663.6 L2472.8,858.4 L2474.2,664.9 L2475.6,855.1 L2477.0,672.3 L2478.4,855.5 L2479.7,669.6 L2481.1,853.9 L2482.5,665.4 L2483.9,862.1 L2485.3,659.4 L2486.7,858.8 L2488.1,663.8 L2489.5,852.6 L2490.9,660.4 L2492.3,854.5 L2493.6,662.4 L2495.0,860.7 L2496.4,665.2 L2497.8,861.0 L2499.2,661.8 L2500.6,859.6 L2502.0,671.6 L2503.4,848.8 L2504.8,680.5 L2506.2,857.9 L2507.5,649.8 L2508.9,855.0 L2510.3,663.4 L2511.7,860.4 L2513.1,679.8 L2514.5,843.5 L2515.9,658.2 L2517.3,843.6 L2518.7,649.0 L2520.1,860.2 L2521.4,656.9 L2522.8,866.0 L2524.2,654.4 L2525.6,858.2 L2527.0,658.5 L2528.4,863.6 L2529.8,661.9 L2531.2,864.4 L2532.6,662.1 L2534.0,860.4 L2535.3,655.0 L2536.7,853.7 L2538.1,664.2 L2539.5,859.4" fill="none" stroke="#34489e" stroke-width="1.35" stroke-linejoin="miter"/></svg><div class="t " style="left:268.7px;width:1000px;text-align:center;top:962.4px;font-size:14.8px;color:#777;transform:scaleY(1.04);transform-origin:0 84.65%;">Nov 21</div><div class="t " style="left:403.8px;width:1000px;text-align:center;top:962.4px;font-size:14.8px;color:#777;transform:scaleY(1.04);transform-origin:0 84.65%;">12:00 pm</div><div class="t " style="left:538.9px;width:1000px;text-align:center;top:962.4px;font-size:14.8px;color:#777;transform:scaleY(1.04);transform-origin:0 84.65%;">Nov 22</div><div class="t " style="left:674.0px;width:1000px;text-align:center;top:962.4px;font-size:14.8px;color:#777;transform:scaleY(1.04);transform-origin:0 84.65%;">12:00 pm</div><div class="t " style="left:809.1px;width:1000px;text-align:center;top:962.4px;font-size:14.8px;color:#777;transform:scaleY(1.04);transform-origin:0 84.65%;">Nov 23</div><div class="t " style="left:944.2px;width:1000px;text-align:center;top:962.4px;font-size:14.8px;color:#777;transform:scaleY(1.04);transform-origin:0 84.65%;">12:00 pm</div><div class="t " style="left:1079.3px;width:1000px;text-align:center;top:962.4px;font-size:14.8px;color:#777;transform:scaleY(1.04);transform-origin:0 84.65%;">Nov 24</div><div class="t " style="left:1214.4px;width:1000px;text-align:center;top:962.4px;font-size:14.8px;color:#777;transform:scaleY(1.04);transform-origin:0 84.65%;">12:00 pm</div><div class="t " style="left:1349.5px;width:1000px;text-align:center;top:962.4px;font-size:14.8px;color:#777;transform:scaleY(1.04);transform-origin:0 84.65%;">Nov 25</div><div class="t " style="left:1484.6px;width:1000px;text-align:center;top:962.4px;font-size:14.8px;color:#777;transform:scaleY(1.04);transform-origin:0 84.65%;">12:00 pm</div><div class="t " style="left:1619.7px;width:1000px;text-align:center;top:962.4px;font-size:14.8px;color:#777;transform:scaleY(1.04);transform-origin:0 84.65%;">Nov 26</div><div class="t " style="left:1754.8px;width:1000px;text-align:center;top:962.4px;font-size:14.8px;color:#777;transform:scaleY(1.04);transform-origin:0 84.65%;">12:00 pm</div><div class="t " style="left:1889.9px;width:1000px;text-align:center;top:962.4px;font-size:14.8px;color:#777;transform:scaleY(1.04);transform-origin:0 84.65%;">Nov 27</div><div class="t " style="right:16.6px;top:962.4px;font-size:14.8px;color:#777;transform:scaleY(1.04);transform-origin:0 84.65%;">12:00 pm</div><svg style="left:624px;top:984px" width="14" height="19" viewBox="0 0 14 19"><path d="M7,0.5 V15" stroke="#1c6d5a" stroke-width="2.6"/><path d="M1,10.5 L7,18 L13,10.5 Z" fill="#1c6d5a"/></svg><div class="t " style="left:646.7px;top:987.4px;font-size:13.2px;color:#1c6d5a;transform:scaleY(1.12);transform-origin:0 84.65%;">11/20/2018 1:27 PM <span style="text-decoration:underline;text-underline-offset:2px;">EST</span></div><div class="t " style="right:17.3px;top:987.4px;font-size:13.2px;color:#1c6d5a;transform:scaleY(1.12);transform-origin:0 84.65%;">11/27/2018 1:27 PM <span style="text-decoration:underline;text-underline-offset:2px;">EST</span></div><svg style="left:1438px;top:985px" width="240" height="18" viewBox="0 0 240 18"><g fill="#1c6d5a">
<path d="M1,8.5 L10,1 V16 Z M10,8.5 L19,1 V16 Z"/>
<path d="M38,8.5 L47.5,1 V16 Z"/>
<path d="M122.5,1 L132,8.5 L122.5,16 Z"/>
<path d="M150,1 L159.5,8.5 L150,16 Z M159,1 L168.5,8.5 L159,16 Z"/>
<path d="M186,1 L196,8.5 L186,16 Z"/><rect x="196" y="1" width="2.8" height="15.5"/>
</g>
<path d="M220.5,6.5 A6,6 0 0 1 230.5,5.5 M229.5,11 A6,6 0 0 1 219.5,12" fill="none" stroke="#1c6d5a" stroke-width="2.2"/>
<path d="M231.5,1.5 V7 H226 Z M218.5,16 V10.5 H224 Z" fill="#1c6d5a"/></svg><div class="t " style="left:1023.2px;width:1000px;text-align:center;top:987.6px;font-size:13.2px;color:#1c6d5a;transform:scaleY(1.12);transform-origin:0 84.65%;">7 days</div><div style="position:absolute;left:614px;top:1009px;width:1944px;height:81.5px;background:#f5f5f5;border-top:1px solid #ececec;box-sizing:border-box;"></div><div style="position:absolute;left:645.4px;top:1019.6px;width:1867px;height:16.6px;background:#f1f1f1;border:2px solid #c9c9c9;border-radius:4px;box-sizing:border-box;"></div><div class="t " style="left:215.9px;width:1000px;text-align:center;top:1042.9px;font-size:11.9px;color:#8a8a8a;transform:scaleY(1.12);transform-origin:0 84.65%;">Nov 9</div><div class="t " style="left:322.4px;width:1000px;text-align:center;top:1042.9px;font-size:11.9px;color:#8a8a8a;transform:scaleY(1.12);transform-origin:0 84.65%;">Nov 11</div><div class="t " style="left:428.8px;width:1000px;text-align:center;top:1042.9px;font-size:11.9px;color:#8a8a8a;transform:scaleY(1.12);transform-origin:0 84.65%;">Nov 13</div><div class="t " style="left:535.3px;width:1000px;text-align:center;top:1042.9px;font-size:11.9px;color:#8a8a8a;transform:scaleY(1.12);transform-origin:0 84.65%;">Nov 15</div><div class="t " style="left:641.7px;width:1000px;text-align:center;top:1042.9px;font-size:11.9px;color:#8a8a8a;transform:scaleY(1.12);transform-origin:0 84.65%;">Nov 17</div><div class="t " style="left:748.2px;width:1000px;text-align:center;top:1042.9px;font-size:11.9px;color:#8a8a8a;transform:scaleY(1.12);transform-origin:0 84.65%;">Nov 19</div><div class="t " style="left:854.7px;width:1000px;text-align:center;top:1042.9px;font-size:11.9px;color:#8a8a8a;transform:scaleY(1.12);transform-origin:0 84.65%;">Nov 21</div><div class="t " style="left:961.1px;width:1000px;text-align:center;top:1042.9px;font-size:11.9px;color:#8a8a8a;transform:scaleY(1.12);transform-origin:0 84.65%;">Nov 23</div><div class="t " style="left:1067.6px;width:1000px;text-align:center;top:1042.9px;font-size:11.9px;color:#8a8a8a;transform:scaleY(1.12);transform-origin:0 84.65%;">Nov 25</div><div class="t " style="left:1174.0px;width:1000px;text-align:center;top:1042.9px;font-size:11.9px;color:#8a8a8a;transform:scaleY(1.12);transform-origin:0 84.65%;">Nov 27</div><div class="t " style="left:1280.5px;width:1000px;text-align:center;top:1042.9px;font-size:11.9px;color:#8a8a8a;transform:scaleY(1.12);transform-origin:0 84.65%;">Nov 29</div><div class="t " style="left:1387.0px;width:1000px;text-align:center;top:1042.9px;font-size:11.9px;color:#8a8a8a;transform:scaleY(1.12);transform-origin:0 84.65%;">Dec '18</div><div class="t " style="left:1493.4px;width:1000px;text-align:center;top:1042.9px;font-size:11.9px;color:#8a8a8a;transform:scaleY(1.12);transform-origin:0 84.65%;">Dec 3</div><div class="t " style="left:1599.9px;width:1000px;text-align:center;top:1042.9px;font-size:11.9px;color:#8a8a8a;transform:scaleY(1.12);transform-origin:0 84.65%;">Dec 5</div><div class="t " style="left:1706.3px;width:1000px;text-align:center;top:1042.9px;font-size:11.9px;color:#8a8a8a;transform:scaleY(1.12);transform-origin:0 84.65%;">Dec 7</div><div class="t " style="left:1812.8px;width:1000px;text-align:center;top:1042.9px;font-size:11.9px;color:#8a8a8a;transform:scaleY(1.12);transform-origin:0 84.65%;">Dec 9</div><div class="t " style="left:1919.3px;width:1000px;text-align:center;top:1042.9px;font-size:11.9px;color:#8a8a8a;transform:scaleY(1.12);transform-origin:0 84.65%;">Dec 11</div><svg style="left:0;top:0" width="2558" height="1266" viewBox="0 0 2558 1266"><path d="M715.9,1036 V1040.5 M822.4,1036 V1040.5 M928.8,1036 V1040.5 M1035.3,1036 V1040.5 M1141.7,1036 V1040.5 M1248.2,1036 V1040.5 M1354.7,1036 V1040.5 M1461.1,1036 V1040.5 M1567.6,1036 V1040.5 M1674.0,1036 V1040.5 M1780.5,1036 V1040.5 M1887.0,1036 V1040.5 M1993.4,1036 V1040.5 M2099.9,1036 V1040.5 M2206.3,1036 V1040.5 M2312.8,1036 V1040.5 M2419.3,1036 V1040.5" stroke="#c9c9c9" stroke-width="1.2"/></svg><div style="position:absolute;left:1328px;top:1017.5px;width:379px;height:20.5px;background:#fff;border:3px solid #007960;border-radius:1px;box-sizing:border-box;"></div><div style="position:absolute;left:1326.6px;top:1016px;width:6px;height:23.5px;background:#fff;border:2px solid #007960;box-sizing:border-box;"></div><div style="position:absolute;left:1702.4px;top:1016px;width:6px;height:23.5px;background:#fff;border:2px solid #007960;box-sizing:border-box;"></div><svg style="left:2524px;top:1019.5px" width="15" height="18" viewBox="0 0 15 18"><rect width="15" height="18" fill="#007960"/><path d="M0.5,14 L3,3 L5.5,15 L7.5,3 L10,15 L12,3 L14.5,14" fill="none" stroke="#fff" stroke-width="1.2"/></svg><svg style="left:624px;top:1064.5px" width="14" height="19" viewBox="0 0 14 19"><path d="M7,4 V18.5" stroke="#1c6d5a" stroke-width="2.6"/><path d="M1,8 L7,0.5 L13,8 Z" fill="#1c6d5a"/></svg><div class="t " style="left:646.7px;top:1071.0px;font-size:13.5px;color:#1c6d5a;transform:scaleY(1.12);transform-origin:0 84.65%;">11/7/2018</div><div class="t " style="left:1092.0px;width:1000px;text-align:center;top:1070.8px;font-size:13.9px;color:#1c6d5a;transform:scaleY(1.12);transform-origin:0 84.65%;">1.2 months</div><div class="t " style="right:21.0px;top:1071.0px;font-size:13.5px;color:#1c6d5a;transform:scaleY(1.12);transform-origin:0 84.65%;">12/12/2018</div><div style="position:absolute;left:614px;top:1090.5px;width:1944px;height:31.8px;background:#007960;"></div><svg style="left:626px;top:1098px" width="20" height="17" viewBox="0 0 20 17"><path d="M1,0.5 V16 H19" fill="none" stroke="#fff" stroke-width="1.7"/><path d="M3,14.5 V8 L7,3 L10,7.5 L14,2.5 L18.5,8 V14.5 Z" fill="#fff"/></svg><div class="t " style="left:648.3px;top:1099.8px;font-size:15.0px;color:#fff;transform:scaleY(1.12);transform-origin:0 84.65%;">Details</div><div style="position:absolute;left:2458.2px;top:1094px;width:94.4px;height:25.5px;background:#fff;border-radius:4px;"></div><svg style="left:2465px;top:1098px" width="19" height="17" viewBox="0 0 19 17"><g fill="#333">
<circle cx="6.5" cy="9" r="4.2"/><path d="M6.5,2.6 V15.4 M0.1,9 H12.9 M2,4.5 L11,13.5 M11,4.5 L2,13.5" stroke="#333" stroke-width="2"/>
<circle cx="14.5" cy="4" r="2.6"/><circle cx="14.5" cy="13" r="2.4"/></g><circle cx="6.5" cy="9" r="1.8" fill="#fff"/></svg><div class="t " style="left:2485.3px;top:1100.9px;font-size:12.6px;color:#222;transform:scaleY(1.12);transform-origin:0 84.65%;">Customize</div><svg style="left:707.5px;top:1135.5px" width="11" height="11" viewBox="0 0 11 11"><path d="M1.5,1.5 L9.5,9.5 M9.5,1.5 L1.5,9.5" stroke="#777" stroke-width="2.6"/></svg><svg style="left:732px;top:1134px" width="14" height="14" viewBox="0 0 14 14"><rect x="1" y="1" width="11.6" height="11.6" rx="2" fill="#fff" stroke="#666" stroke-width="1.3"/></svg><svg style="left:793.5px;top:1134.5px" width="10" height="13" viewBox="0 0 10 13"><path d="M1,5.5 L5,0.8 L9,5.5 Z M1,7.5 L5,12.2 L9,7.5 Z" fill="#888"/></svg><div class="t " style="left:816.2px;top:1134.0px;font-size:15.0px;color:#222;transform:scaleY(1.12);transform-origin:0 84.65%;">Name</div><svg style="left:865.7px;top:1134.5px" width="10" height="13" viewBox="0 0 10 13"><path d="M1,5.5 L5,0.8 L9,5.5 Z M1,7.5 L5,12.2 L9,7.5 Z" fill="#888"/></svg><div class="t " style="left:2333.8px;top:1134.2px;font-size:14.5px;color:#222;transform:scaleY(1.12);transform-origin:0 84.65%;">Assets</div><div class="t " style="left:2394.3px;top:1134.0px;font-size:14.9px;color:#1f7a68;transform:scaleY(1.12);transform-origin:0 84.65%;">Lane</div><svg style="left:2437px;top:1134.5px" width="10" height="6" viewBox="0 0 10 6"><path d="M0.5,5.5 L5,0.5 L9.5,5.5 Z" fill="#1f7a68"/></svg><svg style="left:2530px;top:1129.5px" width="19" height="17" viewBox="0 0 19 17">
<rect x="0.5" y="0.5" width="13" height="12" fill="#fff" stroke="#555" stroke-width="1"/><path d="M0.5,4.5 H13.5 M0.5,8.5 H13.5 M4.8,0.5 V12.5 M9.2,0.5 V12.5" stroke="#777" stroke-width="0.8"/>
<circle cx="12.5" cy="10.5" r="5.6" fill="#222"/><path d="M12.5,7.3 V13.7 M9.3,10.5 H15.7" stroke="#fff" stroke-width="2"/></svg><div style="position:absolute;left:614px;top:1154.5px;width:1944px;height:2px;background:#dcdcdc;"></div><div style="position:absolute;left:614px;top:1156.5px;width:1944px;height:27px;background:#f9f9f9;"></div><div style="position:absolute;left:614px;top:1183.3px;width:1944px;height:1.5px;background:#e3e3e3;"></div><svg style="left:619px;top:1162.0px" width="17" height="16" viewBox="0 0 17 16"><path d="M13,2 H3 Q1,2 1,4 V13 Q1,15 3,15 H12 Q14,15 14,13 V9" fill="none" stroke="#5fa897" stroke-width="1.4"/><path d="M6,10.5 L6.6,8 L14,0.8 L16.2,3 L8.8,10.2 Z" fill="#007960"/></svg><svg style="left:652px;top:1162.0px" width="16" height="16" viewBox="0 0 16 16"><path d="M15.5,0.5 C10,0.5 6.5,3.5 4.5,7 L2,7.5 L0.5,10 L3.5,9.8 L6.2,12.5 L6,15.5 L8.5,14 L9,11.5 C12.5,9.5 15.5,6 15.5,0.5 Z" fill="#007960"/><path d="M1,15 L3.8,12.2" stroke="#007960" stroke-width="1.6"/></svg><svg style="left:683px;top:1163.0px" width="14" height="14" viewBox="0 0 14 14"><circle cx="7" cy="7" r="6.8" fill="#007960"/><rect x="5.8" y="5.8" width="2.6" height="5.5" fill="#fff"/><rect x="4.8" y="10.3" width="4.6" height="1.3" fill="#fff"/><rect x="4.8" y="5.8" width="2" height="1.2" fill="#fff"/><circle cx="7.1" cy="3.4" r="1.3" fill="#fff"/></svg><svg style="left:707.5px;top:1164.5px" width="11" height="11" viewBox="0 0 11 11"><path d="M1.5,1.5 L9.5,9.5 M9.5,1.5 L1.5,9.5" stroke="#007960" stroke-width="2.6"/></svg><svg style="left:732px;top:1163.0px" width="14" height="14" viewBox="0 0 14 14"><rect x="1" y="1" width="11.6" height="11.6" rx="2" fill="#fff" stroke="#666" stroke-width="1.3"/></svg><svg style="left:761px;top:1159px" width="19" height="18" viewBox="0 0 19 18"><path d="M1,14 L4.6,1.5 L8.6,13 L11.4,6 L14.6,15 L17,11" fill="none" stroke="#3d4fa0" stroke-width="1.9" stroke-linejoin="round"/></svg><div class="t " style="left:788.3px;top:1163.5px;font-size:14.6px;color:#333;transform:scaleY(1.12);transform-origin:0 84.65%;">psi</div><div class="t " style="left:816.2px;top:1163.3px;font-size:15.0px;color:#222;transform:scaleY(1.12);transform-origin:0 84.65%;">Press_hpf</div><div class="t " style="left:2333.8px;top:1163.3px;font-size:14.9px;color:#1f7a68;transform:scaleY(1.12);transform-origin:0 84.65%;text-decoration:underline;text-decoration-color:#7fb8a8;text-underline-offset:3px;">Pump 1</div><div class="t " style="left:1939.8px;width:1000px;text-align:center;top:1163.5px;font-size:14.5px;color:#333;transform:scaleY(1.12);transform-origin:0 84.65%;">1</div><svg style="left:619px;top:1190.0px" width="17" height="16" viewBox="0 0 17 16"><path d="M13,2 H3 Q1,2 1,4 V13 Q1,15 3,15 H12 Q14,15 14,13 V9" fill="none" stroke="#5fa897" stroke-width="1.4"/><path d="M6,10.5 L6.6,8 L14,0.8 L16.2,3 L8.8,10.2 Z" fill="#007960"/></svg><svg style="left:652px;top:1190.0px" width="16" height="16" viewBox="0 0 16 16"><path d="M15.5,0.5 C10,0.5 6.5,3.5 4.5,7 L2,7.5 L0.5,10 L3.5,9.8 L6.2,12.5 L6,15.5 L8.5,14 L9,11.5 C12.5,9.5 15.5,6 15.5,0.5 Z" fill="#007960"/><path d="M1,15 L3.8,12.2" stroke="#007960" stroke-width="1.6"/></svg><svg style="left:683px;top:1191.0px" width="14" height="14" viewBox="0 0 14 14"><circle cx="7" cy="7" r="6.8" fill="#007960"/><rect x="5.8" y="5.8" width="2.6" height="5.5" fill="#fff"/><rect x="4.8" y="10.3" width="4.6" height="1.3" fill="#fff"/><rect x="4.8" y="5.8" width="2" height="1.2" fill="#fff"/><circle cx="7.1" cy="3.4" r="1.3" fill="#fff"/></svg><svg style="left:707.5px;top:1192.5px" width="11" height="11" viewBox="0 0 11 11"><path d="M1.5,1.5 L9.5,9.5 M9.5,1.5 L1.5,9.5" stroke="#007960" stroke-width="2.6"/></svg><svg style="left:732px;top:1191.0px" width="14" height="14" viewBox="0 0 14 14"><rect x="1" y="1" width="11.6" height="11.6" rx="2" fill="#fff" stroke="#666" stroke-width="1.3"/></svg><svg style="left:761px;top:1187px" width="19" height="18" viewBox="0 0 19 18"><path d="M1,0.5 V17 H18" fill="none" stroke="#9a2a9a" stroke-width="1.8"/><rect x="4.4" y="9" width="3" height="7" fill="#9a2a9a"/><rect x="9" y="2.5" width="3" height="13.5" fill="#9a2a9a"/><rect x="13.6" y="6" width="3" height="10" fill="#9a2a9a"/></svg><div class="t " style="left:816.2px;top:1191.6px;font-size:14.4px;color:#222;transform:scaleY(1.12);transform-origin:0 84.65%;">Press-avg FFT</div><div class="t " style="left:2333.8px;top:1191.3px;font-size:14.9px;color:#1f7a68;transform:scaleY(1.12);transform-origin:0 84.65%;text-decoration:underline;text-decoration-color:#7fb8a8;text-underline-offset:3px;">Pump 1</div>
</body></html>
